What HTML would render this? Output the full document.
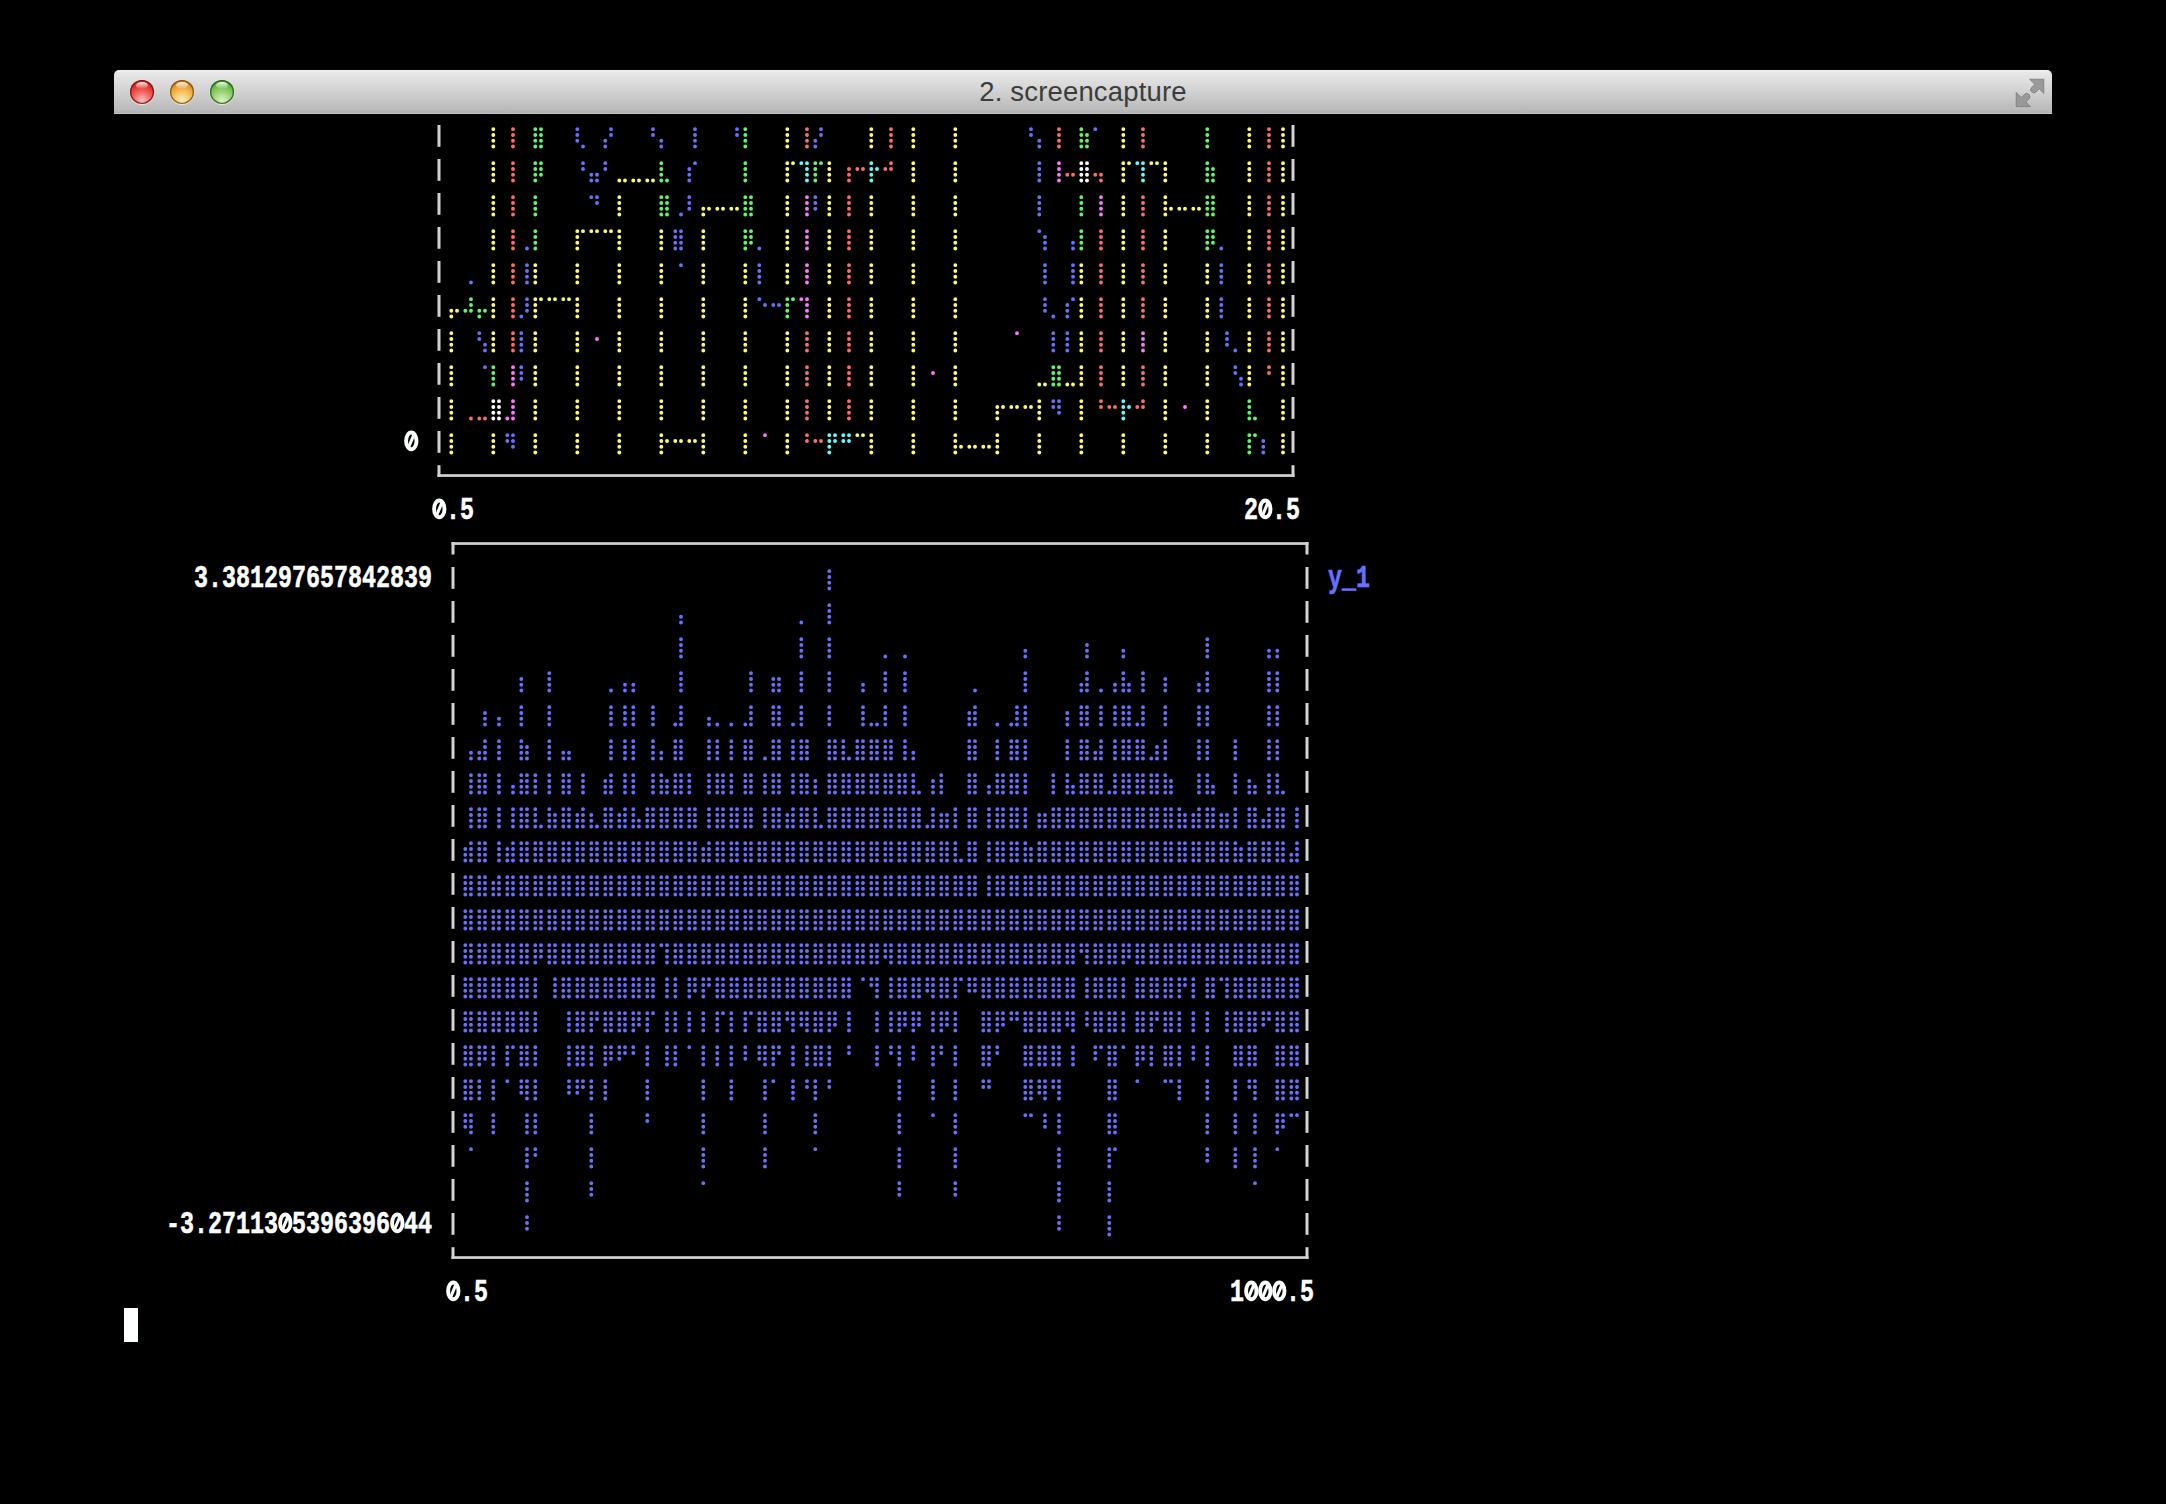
<!DOCTYPE html>
<html><head><meta charset="utf-8"><title>2. screencapture</title>
<style>
html,body{margin:0;padding:0;background:#000;width:2166px;height:1504px;overflow:hidden;}
#bar{position:absolute;left:114px;top:70px;width:1938px;height:44px;border-radius:5px 5px 0 0;
background:linear-gradient(#f6f6f6 0px,#e8e8e8 2px,#d1d1d1 22px,#b8b8b8 41px,#b0b0b0 42.6px,#c4c4c4 43.2px,#c4c4c4 44px);}
#title{position:absolute;left:0;top:0;width:100%;text-align:center;font-family:"Liberation Sans",sans-serif;font-size:27.5px;letter-spacing:0.17px;line-height:44px;color:#3c3c3c;}
.tl{position:absolute;top:10px;width:24px;height:24px;border-radius:50%;box-shadow:0 1px 1px rgba(255,255,255,.7);}
#red{left:16px;box-shadow:inset 0 0 0 1.3px rgba(110,10,10,.75),0 1px 1px rgba(255,255,255,.7);background:radial-gradient(circle at 50% 85%,#f8c3c3 0,#f36a66 35%,#e53a36 60%,#b81d1a 92%,#7d1210 100%);}
#yel{left:56px;box-shadow:inset 0 0 0 1.3px rgba(110,70,5,.75),0 1px 1px rgba(255,255,255,.7);background:radial-gradient(circle at 50% 85%,#fbefc0 0,#f6c564 35%,#ee9f37 60%,#b87413 92%,#7a4d0a 100%);}
#grn{left:96px;box-shadow:inset 0 0 0 1.3px rgba(30,80,15,.75),0 1px 1px rgba(255,255,255,.7);background:radial-gradient(circle at 50% 85%,#e0f2cc 0,#9fd67a 35%,#74c04e 60%,#3f8a26 92%,#285c18 100%);}
.hl{position:absolute;left:6px;top:2px;width:12px;height:7px;border-radius:50%;background:linear-gradient(rgba(255,255,255,.95),rgba(255,255,255,0));}
#fs{position:absolute;left:1901px;top:8px;}
svg#term{position:absolute;left:0;top:0;}
#term text{font-family:"Liberation Mono",monospace;font-weight:bold;font-size:31px;}
</style></head><body>
<div id="bar">
<div id="title">2. screencapture</div>
<div class="tl" id="red"><div class="hl"></div></div>
<div class="tl" id="yel"><div class="hl"></div></div>
<div class="tl" id="grn"><div class="hl"></div></div>
<svg id="fs" width="32" height="32" viewBox="0 0 32 32"><g fill="#999" stroke="#727272" stroke-width="0.7">
<path d="M14.6 1.2h14.2v14.2l-4.6-4.6-3.1 3.1a3.1 3.1 0 0 1-4.5-4.5l3.1-3.1z"/>
<path d="M1.2 14.4v14.2h14.2l-4.6-4.6 3.1-3.1a3.1 3.1 0 0 0-4.5-4.5l-3.1 3.1z"/>
</g></svg>
</div>
<svg id="term" width="2166" height="1504" viewBox="0 0 2166 1504">
<g fill="#d2d2d2"><rect x="437.5" y="125" width="3" height="21.8"/><rect x="437.5" y="159" width="3" height="21.8"/><rect x="437.5" y="193" width="3" height="21.8"/><rect x="437.5" y="227" width="3" height="21.8"/><rect x="437.5" y="261" width="3" height="21.8"/><rect x="437.5" y="295" width="3" height="21.8"/><rect x="437.5" y="329" width="3" height="21.8"/><rect x="437.5" y="363" width="3" height="21.8"/><rect x="437.5" y="397" width="3" height="21.8"/><rect x="437.5" y="431" width="3" height="21.8"/><rect x="1291.5" y="125" width="3" height="21.8"/><rect x="1291.5" y="159" width="3" height="21.8"/><rect x="1291.5" y="193" width="3" height="21.8"/><rect x="1291.5" y="227" width="3" height="21.8"/><rect x="1291.5" y="261" width="3" height="21.8"/><rect x="1291.5" y="295" width="3" height="21.8"/><rect x="1291.5" y="329" width="3" height="21.8"/><rect x="1291.5" y="363" width="3" height="21.8"/><rect x="1291.5" y="397" width="3" height="21.8"/><rect x="1291.5" y="431" width="3" height="21.8"/><rect x="437.5" y="474.2" width="857.0" height="2.7"/><rect x="437.5" y="465.2" width="3" height="11.7"/><rect x="1291.5" y="465.2" width="3" height="11.7"/><rect x="451.5" y="542.2" width="857.0" height="2.7"/><rect x="451.5" y="542.2" width="3" height="12.3"/><rect x="1305.5" y="542.2" width="3" height="12.3"/><rect x="451.5" y="567" width="3" height="21.8"/><rect x="451.5" y="601" width="3" height="21.8"/><rect x="451.5" y="635" width="3" height="21.8"/><rect x="451.5" y="669" width="3" height="21.8"/><rect x="451.5" y="703" width="3" height="21.8"/><rect x="451.5" y="737" width="3" height="21.8"/><rect x="451.5" y="771" width="3" height="21.8"/><rect x="451.5" y="805" width="3" height="21.8"/><rect x="451.5" y="839" width="3" height="21.8"/><rect x="451.5" y="873" width="3" height="21.8"/><rect x="451.5" y="907" width="3" height="21.8"/><rect x="451.5" y="941" width="3" height="21.8"/><rect x="451.5" y="975" width="3" height="21.8"/><rect x="451.5" y="1009" width="3" height="21.8"/><rect x="451.5" y="1043" width="3" height="21.8"/><rect x="451.5" y="1077" width="3" height="21.8"/><rect x="451.5" y="1111" width="3" height="21.8"/><rect x="451.5" y="1145" width="3" height="21.8"/><rect x="451.5" y="1179" width="3" height="21.8"/><rect x="451.5" y="1213" width="3" height="21.8"/><rect x="1305.5" y="567" width="3" height="21.8"/><rect x="1305.5" y="601" width="3" height="21.8"/><rect x="1305.5" y="635" width="3" height="21.8"/><rect x="1305.5" y="669" width="3" height="21.8"/><rect x="1305.5" y="703" width="3" height="21.8"/><rect x="1305.5" y="737" width="3" height="21.8"/><rect x="1305.5" y="771" width="3" height="21.8"/><rect x="1305.5" y="805" width="3" height="21.8"/><rect x="1305.5" y="839" width="3" height="21.8"/><rect x="1305.5" y="873" width="3" height="21.8"/><rect x="1305.5" y="907" width="3" height="21.8"/><rect x="1305.5" y="941" width="3" height="21.8"/><rect x="1305.5" y="975" width="3" height="21.8"/><rect x="1305.5" y="1009" width="3" height="21.8"/><rect x="1305.5" y="1043" width="3" height="21.8"/><rect x="1305.5" y="1077" width="3" height="21.8"/><rect x="1305.5" y="1111" width="3" height="21.8"/><rect x="1305.5" y="1145" width="3" height="21.8"/><rect x="1305.5" y="1179" width="3" height="21.8"/><rect x="1305.5" y="1213" width="3" height="21.8"/><rect x="451.5" y="1256.2" width="857.0" height="2.7"/><rect x="451.5" y="1247.2" width="3" height="11.7"/><rect x="1305.5" y="1247.2" width="3" height="11.7"/></g>
<g fill="none" stroke-width="3.9" stroke-linecap="round"><path stroke="#fefb67" d="M493.3 129.15h0M493.3 134.95h0M493.3 140.75h0M493.3 146.55h0M787.3 129.15h0M787.3 134.95h0M787.3 140.75h0M787.3 146.55h0M871.3 129.15h0M871.3 134.95h0M871.3 140.75h0M871.3 146.55h0M913.3 129.15h0M913.3 134.95h0M913.3 140.75h0M913.3 146.55h0M955.3 129.15h0M955.3 134.95h0M955.3 140.75h0M955.3 146.55h0M1123.3 129.15h0M1123.3 134.95h0M1123.3 140.75h0M1123.3 146.55h0M1249.3 129.15h0M1249.3 134.95h0M1249.3 140.75h0M1249.3 146.55h0M1283.0 129.15h0M1283.0 134.95h0M1283.0 140.75h0M1283.0 146.55h0M493.3 163.15h0M493.3 168.95h0M493.3 174.75h0M493.3 180.55h0M619.3 180.55h0M625.0 180.55h0M633.3 180.55h0M639.0 180.55h0M647.3 180.55h0M653.0 180.55h0M787.3 163.15h0M787.3 168.95h0M787.3 174.75h0M787.3 180.55h0M793.0 163.15h0M829.3 163.15h0M829.3 168.95h0M829.3 174.75h0M829.3 180.55h0M913.3 163.15h0M913.3 168.95h0M913.3 174.75h0M913.3 180.55h0M955.3 163.15h0M955.3 168.95h0M955.3 174.75h0M955.3 180.55h0M1123.3 163.15h0M1123.3 168.95h0M1123.3 174.75h0M1123.3 180.55h0M1129.0 163.15h0M1151.3 163.15h0M1157.0 163.15h0M1165.3 163.15h0M1165.3 168.95h0M1165.3 174.75h0M1165.3 180.55h0M1249.3 163.15h0M1249.3 168.95h0M1249.3 174.75h0M1249.3 180.55h0M1283.0 163.15h0M1283.0 168.95h0M1283.0 174.75h0M1283.0 180.55h0M493.3 197.15h0M493.3 202.95h0M493.3 208.75h0M493.3 214.55h0M619.3 197.15h0M619.3 202.95h0M619.3 208.75h0M619.3 214.55h0M703.3 208.75h0M703.3 214.55h0M709.0 208.75h0M717.3 208.75h0M723.0 208.75h0M731.3 208.75h0M737.0 208.75h0M787.3 197.15h0M787.3 202.95h0M787.3 208.75h0M787.3 214.55h0M829.3 197.15h0M829.3 202.95h0M829.3 208.75h0M829.3 214.55h0M871.3 197.15h0M871.3 202.95h0M871.3 208.75h0M871.3 214.55h0M913.3 197.15h0M913.3 202.95h0M913.3 208.75h0M913.3 214.55h0M955.3 197.15h0M955.3 202.95h0M955.3 208.75h0M955.3 214.55h0M1123.3 197.15h0M1123.3 202.95h0M1123.3 208.75h0M1123.3 214.55h0M1165.3 197.15h0M1165.3 202.95h0M1165.3 208.75h0M1165.3 214.55h0M1171.0 208.75h0M1179.3 208.75h0M1185.0 208.75h0M1193.3 208.75h0M1199.0 208.75h0M1249.3 197.15h0M1249.3 202.95h0M1249.3 208.75h0M1249.3 214.55h0M1283.0 197.15h0M1283.0 202.95h0M1283.0 208.75h0M1283.0 214.55h0M493.3 231.15h0M493.3 236.95h0M493.3 242.75h0M493.3 248.55h0M577.3 231.15h0M577.3 236.95h0M577.3 242.75h0M577.3 248.55h0M583.0 231.15h0M591.3 231.15h0M597.0 231.15h0M605.3 231.15h0M611.0 231.15h0M619.3 231.15h0M619.3 236.95h0M619.3 242.75h0M619.3 248.55h0M661.3 231.15h0M661.3 236.95h0M661.3 242.75h0M661.3 248.55h0M703.3 231.15h0M703.3 236.95h0M703.3 242.75h0M703.3 248.55h0M787.3 231.15h0M787.3 236.95h0M787.3 242.75h0M787.3 248.55h0M829.3 231.15h0M829.3 236.95h0M829.3 242.75h0M829.3 248.55h0M871.3 231.15h0M871.3 236.95h0M871.3 242.75h0M871.3 248.55h0M913.3 231.15h0M913.3 236.95h0M913.3 242.75h0M913.3 248.55h0M955.3 231.15h0M955.3 236.95h0M955.3 242.75h0M955.3 248.55h0M1123.3 231.15h0M1123.3 236.95h0M1123.3 242.75h0M1123.3 248.55h0M1165.3 231.15h0M1165.3 236.95h0M1165.3 242.75h0M1165.3 248.55h0M1249.3 231.15h0M1249.3 236.95h0M1249.3 242.75h0M1249.3 248.55h0M1283.0 231.15h0M1283.0 236.95h0M1283.0 242.75h0M1283.0 248.55h0M493.3 265.15h0M493.3 270.95h0M493.3 276.75h0M493.3 282.55h0M535.3 265.15h0M535.3 270.95h0M535.3 276.75h0M535.3 282.55h0M577.3 265.15h0M577.3 270.95h0M577.3 276.75h0M577.3 282.55h0M619.3 265.15h0M619.3 270.95h0M619.3 276.75h0M619.3 282.55h0M661.3 265.15h0M661.3 270.95h0M661.3 276.75h0M661.3 282.55h0M703.3 265.15h0M703.3 270.95h0M703.3 276.75h0M703.3 282.55h0M745.3 265.15h0M745.3 270.95h0M745.3 276.75h0M745.3 282.55h0M787.3 265.15h0M787.3 270.95h0M787.3 276.75h0M787.3 282.55h0M829.3 265.15h0M829.3 270.95h0M829.3 276.75h0M829.3 282.55h0M871.3 265.15h0M871.3 270.95h0M871.3 276.75h0M871.3 282.55h0M913.3 265.15h0M913.3 270.95h0M913.3 276.75h0M913.3 282.55h0M955.3 265.15h0M955.3 270.95h0M955.3 276.75h0M955.3 282.55h0M1081.3 265.15h0M1081.3 270.95h0M1081.3 276.75h0M1081.3 282.55h0M1123.3 265.15h0M1123.3 270.95h0M1123.3 276.75h0M1123.3 282.55h0M1165.3 265.15h0M1165.3 270.95h0M1165.3 276.75h0M1165.3 282.55h0M1207.3 265.15h0M1207.3 270.95h0M1207.3 276.75h0M1207.3 282.55h0M1249.3 265.15h0M1249.3 270.95h0M1249.3 276.75h0M1249.3 282.55h0M1283.0 265.15h0M1283.0 270.95h0M1283.0 276.75h0M1283.0 282.55h0M451.3 310.75h0M451.3 316.55h0M457.0 310.75h0M493.3 299.15h0M493.3 304.95h0M493.3 310.75h0M493.3 316.55h0M535.3 299.15h0M535.3 304.95h0M535.3 310.75h0M535.3 316.55h0M541.0 299.15h0M549.3 299.15h0M555.0 299.15h0M563.3 299.15h0M569.0 299.15h0M577.3 299.15h0M577.3 304.95h0M577.3 310.75h0M577.3 316.55h0M619.3 299.15h0M619.3 304.95h0M619.3 310.75h0M619.3 316.55h0M661.3 299.15h0M661.3 304.95h0M661.3 310.75h0M661.3 316.55h0M703.3 299.15h0M703.3 304.95h0M703.3 310.75h0M703.3 316.55h0M745.3 299.15h0M745.3 304.95h0M745.3 310.75h0M745.3 316.55h0M829.3 299.15h0M829.3 304.95h0M829.3 310.75h0M829.3 316.55h0M871.3 299.15h0M871.3 304.95h0M871.3 310.75h0M871.3 316.55h0M913.3 299.15h0M913.3 304.95h0M913.3 310.75h0M913.3 316.55h0M955.3 299.15h0M955.3 304.95h0M955.3 310.75h0M955.3 316.55h0M1081.3 299.15h0M1081.3 304.95h0M1081.3 310.75h0M1081.3 316.55h0M1123.3 299.15h0M1123.3 304.95h0M1123.3 310.75h0M1123.3 316.55h0M1165.3 299.15h0M1165.3 304.95h0M1165.3 310.75h0M1165.3 316.55h0M1207.3 299.15h0M1207.3 304.95h0M1207.3 310.75h0M1207.3 316.55h0M1249.3 299.15h0M1249.3 304.95h0M1249.3 310.75h0M1249.3 316.55h0M1283.0 299.15h0M1283.0 304.95h0M1283.0 310.75h0M1283.0 316.55h0M451.3 333.15h0M451.3 338.95h0M451.3 344.75h0M451.3 350.55h0M493.3 333.15h0M493.3 338.95h0M493.3 344.75h0M493.3 350.55h0M535.3 333.15h0M535.3 338.95h0M535.3 344.75h0M535.3 350.55h0M577.3 333.15h0M577.3 338.95h0M577.3 344.75h0M577.3 350.55h0M619.3 333.15h0M619.3 338.95h0M619.3 344.75h0M619.3 350.55h0M661.3 333.15h0M661.3 338.95h0M661.3 344.75h0M661.3 350.55h0M703.3 333.15h0M703.3 338.95h0M703.3 344.75h0M703.3 350.55h0M745.3 333.15h0M745.3 338.95h0M745.3 344.75h0M745.3 350.55h0M787.3 333.15h0M787.3 338.95h0M787.3 344.75h0M787.3 350.55h0M829.3 333.15h0M829.3 338.95h0M829.3 344.75h0M829.3 350.55h0M871.3 333.15h0M871.3 338.95h0M871.3 344.75h0M871.3 350.55h0M913.3 333.15h0M913.3 338.95h0M913.3 344.75h0M913.3 350.55h0M955.3 333.15h0M955.3 338.95h0M955.3 344.75h0M955.3 350.55h0M1081.3 333.15h0M1081.3 338.95h0M1081.3 344.75h0M1081.3 350.55h0M1123.3 333.15h0M1123.3 338.95h0M1123.3 344.75h0M1123.3 350.55h0M1165.3 333.15h0M1165.3 338.95h0M1165.3 344.75h0M1165.3 350.55h0M1207.3 333.15h0M1207.3 338.95h0M1207.3 344.75h0M1207.3 350.55h0M1249.3 333.15h0M1249.3 338.95h0M1249.3 344.75h0M1249.3 350.55h0M1283.0 333.15h0M1283.0 338.95h0M1283.0 344.75h0M1283.0 350.55h0M451.3 367.15h0M451.3 372.95h0M451.3 378.75h0M451.3 384.55h0M535.3 367.15h0M535.3 372.95h0M535.3 378.75h0M535.3 384.55h0M577.3 367.15h0M577.3 372.95h0M577.3 378.75h0M577.3 384.55h0M619.3 367.15h0M619.3 372.95h0M619.3 378.75h0M619.3 384.55h0M661.3 367.15h0M661.3 372.95h0M661.3 378.75h0M661.3 384.55h0M703.3 367.15h0M703.3 372.95h0M703.3 378.75h0M703.3 384.55h0M745.3 367.15h0M745.3 372.95h0M745.3 378.75h0M745.3 384.55h0M787.3 367.15h0M787.3 372.95h0M787.3 378.75h0M787.3 384.55h0M829.3 367.15h0M829.3 372.95h0M829.3 378.75h0M829.3 384.55h0M871.3 367.15h0M871.3 372.95h0M871.3 378.75h0M871.3 384.55h0M913.3 367.15h0M913.3 372.95h0M913.3 378.75h0M913.3 384.55h0M955.3 367.15h0M955.3 372.95h0M955.3 378.75h0M955.3 384.55h0M1039.3 384.55h0M1045.0 384.55h0M1067.3 384.55h0M1073.0 384.55h0M1081.3 367.15h0M1081.3 372.95h0M1081.3 378.75h0M1081.3 384.55h0M1123.3 367.15h0M1123.3 372.95h0M1123.3 378.75h0M1123.3 384.55h0M1165.3 367.15h0M1165.3 372.95h0M1165.3 378.75h0M1165.3 384.55h0M1207.3 367.15h0M1207.3 372.95h0M1207.3 378.75h0M1207.3 384.55h0M1249.3 367.15h0M1249.3 372.95h0M1249.3 378.75h0M1249.3 384.55h0M1283.0 367.15h0M1283.0 372.95h0M1283.0 378.75h0M1283.0 384.55h0M451.3 401.15h0M451.3 406.95h0M451.3 412.75h0M451.3 418.55h0M535.3 401.15h0M535.3 406.95h0M535.3 412.75h0M535.3 418.55h0M577.3 401.15h0M577.3 406.95h0M577.3 412.75h0M577.3 418.55h0M619.3 401.15h0M619.3 406.95h0M619.3 412.75h0M619.3 418.55h0M661.3 401.15h0M661.3 406.95h0M661.3 412.75h0M661.3 418.55h0M703.3 401.15h0M703.3 406.95h0M703.3 412.75h0M703.3 418.55h0M745.3 401.15h0M745.3 406.95h0M745.3 412.75h0M745.3 418.55h0M787.3 401.15h0M787.3 406.95h0M787.3 412.75h0M787.3 418.55h0M829.3 401.15h0M829.3 406.95h0M829.3 412.75h0M829.3 418.55h0M871.3 401.15h0M871.3 406.95h0M871.3 412.75h0M871.3 418.55h0M913.3 401.15h0M913.3 406.95h0M913.3 412.75h0M913.3 418.55h0M955.3 401.15h0M955.3 406.95h0M955.3 412.75h0M955.3 418.55h0M997.3 406.95h0M997.3 412.75h0M997.3 418.55h0M1003.0 406.95h0M1011.3 406.95h0M1017.0 406.95h0M1025.3 406.95h0M1031.0 406.95h0M1039.3 401.15h0M1039.3 406.95h0M1039.3 412.75h0M1039.3 418.55h0M1081.3 401.15h0M1081.3 406.95h0M1081.3 412.75h0M1081.3 418.55h0M1165.3 401.15h0M1165.3 406.95h0M1165.3 412.75h0M1165.3 418.55h0M1207.3 401.15h0M1207.3 406.95h0M1207.3 412.75h0M1207.3 418.55h0M1283.0 401.15h0M1283.0 406.95h0M1283.0 412.75h0M1283.0 418.55h0M451.3 435.15h0M451.3 440.95h0M451.3 446.75h0M451.3 452.55h0M493.3 435.15h0M493.3 440.95h0M493.3 446.75h0M493.3 452.55h0M535.3 435.15h0M535.3 440.95h0M535.3 446.75h0M535.3 452.55h0M577.3 435.15h0M577.3 440.95h0M577.3 446.75h0M577.3 452.55h0M619.3 435.15h0M619.3 440.95h0M619.3 446.75h0M619.3 452.55h0M661.3 435.15h0M661.3 440.95h0M661.3 446.75h0M661.3 452.55h0M667.0 440.95h0M675.3 440.95h0M681.0 440.95h0M689.3 440.95h0M695.0 440.95h0M703.3 435.15h0M703.3 440.95h0M703.3 446.75h0M703.3 452.55h0M745.3 435.15h0M745.3 440.95h0M745.3 446.75h0M745.3 452.55h0M787.3 435.15h0M787.3 440.95h0M787.3 446.75h0M787.3 452.55h0M857.3 435.15h0M863.0 435.15h0M871.3 435.15h0M871.3 440.95h0M871.3 446.75h0M871.3 452.55h0M913.3 435.15h0M913.3 440.95h0M913.3 446.75h0M913.3 452.55h0M955.3 435.15h0M955.3 440.95h0M955.3 446.75h0M955.3 452.55h0M961.0 446.75h0M969.3 446.75h0M975.0 446.75h0M983.3 446.75h0M989.0 446.75h0M997.3 435.15h0M997.3 440.95h0M997.3 446.75h0M997.3 452.55h0M1039.3 435.15h0M1039.3 440.95h0M1039.3 446.75h0M1039.3 452.55h0M1081.3 435.15h0M1081.3 440.95h0M1081.3 446.75h0M1081.3 452.55h0M1123.3 435.15h0M1123.3 440.95h0M1123.3 446.75h0M1123.3 452.55h0M1165.3 435.15h0M1165.3 440.95h0M1165.3 446.75h0M1165.3 452.55h0M1207.3 435.15h0M1207.3 440.95h0M1207.3 446.75h0M1207.3 452.55h0M1283.0 435.15h0M1283.0 440.95h0M1283.0 446.75h0M1283.0 452.55h0"/><path stroke="#ff6d67" d="M513.0 129.15h0M513.0 134.95h0M513.0 140.75h0M513.0 146.55h0M807.0 129.15h0M807.0 134.95h0M807.0 140.75h0M807.0 146.55h0M891.0 129.15h0M891.0 134.95h0M891.0 140.75h0M891.0 146.55h0M1059.0 129.15h0M1059.0 134.95h0M1059.0 140.75h0M1059.0 146.55h0M1143.0 129.15h0M1143.0 134.95h0M1143.0 140.75h0M1143.0 146.55h0M1269.0 129.15h0M1269.0 134.95h0M1269.0 140.75h0M1269.0 146.55h0M513.0 163.15h0M513.0 168.95h0M513.0 174.75h0M513.0 180.55h0M849.0 168.95h0M849.0 174.75h0M849.0 180.55h0M857.3 168.95h0M863.0 168.95h0M885.3 168.95h0M891.0 163.15h0M891.0 168.95h0M1067.3 174.75h0M1073.0 174.75h0M1095.3 174.75h0M1101.0 174.75h0M1101.0 180.55h0M1269.0 163.15h0M1269.0 168.95h0M1269.0 174.75h0M1269.0 180.55h0M513.0 197.15h0M513.0 202.95h0M513.0 208.75h0M513.0 214.55h0M849.0 197.15h0M849.0 202.95h0M849.0 208.75h0M849.0 214.55h0M1143.0 197.15h0M1143.0 202.95h0M1143.0 208.75h0M1143.0 214.55h0M1269.0 197.15h0M1269.0 202.95h0M1269.0 208.75h0M1269.0 214.55h0M513.0 231.15h0M513.0 236.95h0M513.0 242.75h0M513.0 248.55h0M849.0 231.15h0M849.0 236.95h0M849.0 242.75h0M849.0 248.55h0M1101.0 231.15h0M1101.0 236.95h0M1101.0 242.75h0M1101.0 248.55h0M1143.0 231.15h0M1143.0 236.95h0M1143.0 242.75h0M1143.0 248.55h0M1269.0 231.15h0M1269.0 236.95h0M1269.0 242.75h0M1269.0 248.55h0M513.0 265.15h0M513.0 270.95h0M513.0 276.75h0M513.0 282.55h0M849.0 265.15h0M849.0 270.95h0M849.0 276.75h0M849.0 282.55h0M1101.0 265.15h0M1101.0 270.95h0M1101.0 276.75h0M1101.0 282.55h0M1143.0 265.15h0M1143.0 270.95h0M1143.0 276.75h0M1143.0 282.55h0M1269.0 265.15h0M1269.0 270.95h0M1269.0 276.75h0M1269.0 282.55h0M513.0 299.15h0M513.0 304.95h0M513.0 310.75h0M513.0 316.55h0M849.0 299.15h0M849.0 304.95h0M849.0 310.75h0M849.0 316.55h0M1101.0 299.15h0M1101.0 304.95h0M1101.0 310.75h0M1101.0 316.55h0M1143.0 299.15h0M1143.0 304.95h0M1143.0 310.75h0M1143.0 316.55h0M1269.0 299.15h0M1269.0 304.95h0M1269.0 310.75h0M1269.0 316.55h0M513.0 333.15h0M513.0 338.95h0M513.0 344.75h0M513.0 350.55h0M807.0 333.15h0M807.0 338.95h0M807.0 344.75h0M807.0 350.55h0M849.0 333.15h0M849.0 338.95h0M849.0 344.75h0M849.0 350.55h0M1101.0 333.15h0M1101.0 338.95h0M1101.0 344.75h0M1101.0 350.55h0M1269.0 333.15h0M1269.0 338.95h0M1269.0 344.75h0M1269.0 350.55h0M807.0 367.15h0M807.0 372.95h0M807.0 378.75h0M807.0 384.55h0M849.0 367.15h0M849.0 372.95h0M849.0 378.75h0M849.0 384.55h0M1101.0 367.15h0M1101.0 372.95h0M1101.0 378.75h0M1101.0 384.55h0M1143.0 367.15h0M1143.0 372.95h0M1143.0 378.75h0M1143.0 384.55h0M1269.0 367.15h0M1269.0 372.95h0M471.0 418.55h0M479.3 418.55h0M485.0 418.55h0M807.0 401.15h0M807.0 406.95h0M807.0 412.75h0M807.0 418.55h0M849.0 401.15h0M849.0 406.95h0M849.0 412.75h0M849.0 418.55h0M1101.0 401.15h0M1101.0 406.95h0M1109.3 406.95h0M1115.0 406.95h0M1137.3 406.95h0M1143.0 401.15h0M1143.0 406.95h0M807.0 435.15h0M807.0 440.95h0M815.3 440.95h0M821.0 440.95h0"/><path stroke="#5ff967" d="M535.3 129.15h0M535.3 134.95h0M535.3 140.75h0M535.3 146.55h0M541.0 129.15h0M541.0 134.95h0M541.0 140.75h0M541.0 146.55h0M745.3 129.15h0M745.3 134.95h0M745.3 140.75h0M745.3 146.55h0M1081.3 129.15h0M1081.3 134.95h0M1081.3 140.75h0M1081.3 146.55h0M1087.0 134.95h0M1087.0 140.75h0M1087.0 146.55h0M1207.3 129.15h0M1207.3 134.95h0M1207.3 140.75h0M1207.3 146.55h0M535.3 163.15h0M535.3 168.95h0M535.3 174.75h0M535.3 180.55h0M541.0 163.15h0M541.0 168.95h0M541.0 174.75h0M661.3 163.15h0M661.3 168.95h0M661.3 174.75h0M661.3 180.55h0M667.0 180.55h0M745.3 163.15h0M745.3 168.95h0M745.3 174.75h0M745.3 180.55h0M815.3 163.15h0M815.3 168.95h0M815.3 174.75h0M815.3 180.55h0M821.0 163.15h0M1207.3 163.15h0M1207.3 168.95h0M1207.3 174.75h0M1207.3 180.55h0M1213.0 168.95h0M1213.0 174.75h0M1213.0 180.55h0M535.3 197.15h0M535.3 202.95h0M535.3 208.75h0M535.3 214.55h0M661.3 197.15h0M661.3 202.95h0M661.3 208.75h0M661.3 214.55h0M667.0 197.15h0M667.0 202.95h0M667.0 208.75h0M667.0 214.55h0M745.3 197.15h0M745.3 202.95h0M745.3 208.75h0M745.3 214.55h0M751.0 197.15h0M751.0 202.95h0M751.0 208.75h0M751.0 214.55h0M1081.3 197.15h0M1081.3 202.95h0M1081.3 208.75h0M1081.3 214.55h0M1207.3 197.15h0M1207.3 202.95h0M1207.3 208.75h0M1207.3 214.55h0M1213.0 197.15h0M1213.0 202.95h0M1213.0 208.75h0M1213.0 214.55h0M535.3 231.15h0M535.3 236.95h0M535.3 242.75h0M535.3 248.55h0M745.3 231.15h0M745.3 236.95h0M745.3 242.75h0M745.3 248.55h0M751.0 231.15h0M751.0 236.95h0M751.0 242.75h0M1081.3 231.15h0M1081.3 236.95h0M1081.3 242.75h0M1081.3 248.55h0M1207.3 231.15h0M1207.3 236.95h0M1207.3 242.75h0M1207.3 248.55h0M1213.0 231.15h0M1213.0 236.95h0M1213.0 242.75h0M465.3 310.75h0M471.0 299.15h0M471.0 304.95h0M471.0 310.75h0M479.3 310.75h0M479.3 316.55h0M485.0 310.75h0M787.3 299.15h0M787.3 304.95h0M787.3 310.75h0M787.3 316.55h0M793.0 299.15h0M493.3 367.15h0M493.3 372.95h0M493.3 378.75h0M493.3 384.55h0M1053.3 367.15h0M1053.3 372.95h0M1053.3 378.75h0M1053.3 384.55h0M1059.0 367.15h0M1059.0 372.95h0M1059.0 378.75h0M1059.0 384.55h0M1249.3 401.15h0M1249.3 406.95h0M1249.3 412.75h0M1249.3 418.55h0M1255.0 418.55h0M1249.3 435.15h0M1249.3 440.95h0M1249.3 446.75h0M1249.3 452.55h0M1255.0 435.15h0"/><path stroke="#6871ff" d="M577.3 129.15h0M577.3 134.95h0M577.3 140.75h0M583.0 146.55h0M605.3 140.75h0M605.3 146.55h0M611.0 129.15h0M611.0 134.95h0M653.0 129.15h0M653.0 134.95h0M661.3 140.75h0M661.3 146.55h0M695.0 129.15h0M695.0 134.95h0M695.0 140.75h0M695.0 146.55h0M737.0 129.15h0M737.0 134.95h0M815.3 140.75h0M815.3 146.55h0M821.0 129.15h0M821.0 134.95h0M1031.0 129.15h0M1031.0 134.95h0M1039.3 140.75h0M1039.3 146.55h0M1095.3 129.15h0M583.0 163.15h0M583.0 168.95h0M591.3 174.75h0M591.3 180.55h0M597.0 174.75h0M597.0 180.55h0M605.3 163.15h0M605.3 168.95h0M689.3 168.95h0M689.3 174.75h0M689.3 180.55h0M695.0 163.15h0M1039.3 163.15h0M1039.3 168.95h0M1039.3 174.75h0M1039.3 180.55h0M591.3 197.15h0M597.0 197.15h0M597.0 202.95h0M681.0 214.55h0M689.3 197.15h0M689.3 202.95h0M689.3 208.75h0M815.3 197.15h0M815.3 202.95h0M815.3 208.75h0M1039.3 197.15h0M1039.3 202.95h0M1039.3 208.75h0M1039.3 214.55h0M527.0 248.55h0M675.3 231.15h0M675.3 236.95h0M675.3 242.75h0M675.3 248.55h0M681.0 231.15h0M681.0 236.95h0M681.0 242.75h0M681.0 248.55h0M759.3 248.55h0M1039.3 231.15h0M1045.0 236.95h0M1045.0 242.75h0M1045.0 248.55h0M1073.0 242.75h0M1073.0 248.55h0M1221.3 248.55h0M471.0 282.55h0M527.0 265.15h0M527.0 270.95h0M527.0 276.75h0M527.0 282.55h0M681.0 265.15h0M759.3 265.15h0M759.3 270.95h0M759.3 276.75h0M759.3 282.55h0M1045.0 265.15h0M1045.0 270.95h0M1045.0 276.75h0M1045.0 282.55h0M1073.0 265.15h0M1073.0 270.95h0M1073.0 276.75h0M1073.0 282.55h0M1221.3 265.15h0M1221.3 270.95h0M1221.3 276.75h0M1221.3 282.55h0M521.3 316.55h0M527.0 299.15h0M527.0 304.95h0M527.0 310.75h0M759.3 299.15h0M765.0 304.95h0M773.3 304.95h0M779.0 304.95h0M1045.0 299.15h0M1045.0 304.95h0M1045.0 310.75h0M1053.3 316.55h0M1067.3 304.95h0M1067.3 310.75h0M1067.3 316.55h0M1073.0 299.15h0M1221.3 299.15h0M1221.3 304.95h0M1221.3 310.75h0M1221.3 316.55h0M479.3 333.15h0M479.3 338.95h0M485.0 344.75h0M485.0 350.55h0M521.3 333.15h0M521.3 338.95h0M521.3 344.75h0M521.3 350.55h0M1053.3 333.15h0M1053.3 338.95h0M1053.3 344.75h0M1053.3 350.55h0M1067.3 333.15h0M1067.3 338.95h0M1067.3 344.75h0M1067.3 350.55h0M1227.0 333.15h0M1227.0 338.95h0M1227.0 344.75h0M1235.3 350.55h0M485.0 367.15h0M521.3 367.15h0M521.3 372.95h0M521.3 378.75h0M1235.3 367.15h0M1235.3 372.95h0M1241.0 378.75h0M1241.0 384.55h0M1053.3 401.15h0M1053.3 406.95h0M1059.0 401.15h0M1059.0 406.95h0M1059.0 412.75h0M507.3 435.15h0M507.3 440.95h0M513.0 435.15h0M513.0 440.95h0M513.0 446.75h0M1263.3 440.95h0M1263.3 446.75h0M1263.3 452.55h0M829.3 571.15h0M829.3 576.95h0M829.3 582.75h0M829.3 588.55h0M681.0 616.75h0M681.0 622.55h0M801.3 622.55h0M829.3 605.15h0M829.3 610.95h0M829.3 616.75h0M829.3 622.55h0M681.0 639.15h0M681.0 644.95h0M681.0 650.75h0M681.0 656.55h0M801.3 639.15h0M801.3 644.95h0M801.3 650.75h0M801.3 656.55h0M829.3 639.15h0M829.3 644.95h0M829.3 650.75h0M829.3 656.55h0M885.3 656.55h0M905.0 656.55h0M1025.3 650.75h0M1025.3 656.55h0M1087.0 644.95h0M1087.0 650.75h0M1087.0 656.55h0M1123.3 650.75h0M1123.3 656.55h0M1207.3 639.15h0M1207.3 644.95h0M1207.3 650.75h0M1207.3 656.55h0M1269.0 650.75h0M1269.0 656.55h0M1277.3 650.75h0M1277.3 656.55h0M521.3 678.95h0M521.3 684.75h0M521.3 690.55h0M549.3 673.15h0M549.3 678.95h0M549.3 684.75h0M549.3 690.55h0M611.0 690.55h0M625.0 684.75h0M625.0 690.55h0M633.3 684.75h0M633.3 690.55h0M681.0 673.15h0M681.0 678.95h0M681.0 684.75h0M681.0 690.55h0M751.0 673.15h0M751.0 678.95h0M751.0 684.75h0M751.0 690.55h0M773.3 678.95h0M773.3 684.75h0M773.3 690.55h0M779.0 678.95h0M779.0 684.75h0M779.0 690.55h0M801.3 673.15h0M801.3 678.95h0M801.3 684.75h0M801.3 690.55h0M829.3 673.15h0M829.3 678.95h0M829.3 684.75h0M829.3 690.55h0M863.0 684.75h0M863.0 690.55h0M885.3 673.15h0M885.3 678.95h0M885.3 684.75h0M885.3 690.55h0M905.0 673.15h0M905.0 678.95h0M905.0 684.75h0M905.0 690.55h0M975.0 690.55h0M1025.3 673.15h0M1025.3 678.95h0M1025.3 684.75h0M1025.3 690.55h0M1081.3 684.75h0M1081.3 690.55h0M1087.0 673.15h0M1087.0 678.95h0M1087.0 684.75h0M1087.0 690.55h0M1101.0 690.55h0M1115.0 684.75h0M1115.0 690.55h0M1123.3 673.15h0M1123.3 678.95h0M1123.3 684.75h0M1123.3 690.55h0M1129.0 684.75h0M1129.0 690.55h0M1143.0 673.15h0M1143.0 678.95h0M1143.0 684.75h0M1143.0 690.55h0M1165.3 678.95h0M1165.3 684.75h0M1165.3 690.55h0M1199.0 684.75h0M1199.0 690.55h0M1207.3 673.15h0M1207.3 678.95h0M1207.3 684.75h0M1207.3 690.55h0M1269.0 673.15h0M1269.0 678.95h0M1269.0 684.75h0M1269.0 690.55h0M1277.3 673.15h0M1277.3 678.95h0M1277.3 684.75h0M1277.3 690.55h0M485.0 712.95h0M485.0 718.75h0M485.0 724.55h0M499.0 718.75h0M499.0 724.55h0M521.3 707.15h0M521.3 712.95h0M521.3 718.75h0M521.3 724.55h0M549.3 707.15h0M549.3 712.95h0M549.3 718.75h0M549.3 724.55h0M611.0 707.15h0M611.0 712.95h0M611.0 718.75h0M611.0 724.55h0M625.0 707.15h0M625.0 712.95h0M625.0 718.75h0M625.0 724.55h0M633.3 707.15h0M633.3 712.95h0M633.3 718.75h0M633.3 724.55h0M653.0 707.15h0M653.0 712.95h0M653.0 718.75h0M653.0 724.55h0M675.3 724.55h0M681.0 707.15h0M681.0 712.95h0M681.0 718.75h0M681.0 724.55h0M709.0 718.75h0M709.0 724.55h0M717.3 724.55h0M731.3 724.55h0M745.3 724.55h0M751.0 707.15h0M751.0 712.95h0M751.0 718.75h0M751.0 724.55h0M773.3 707.15h0M773.3 712.95h0M773.3 718.75h0M773.3 724.55h0M779.0 707.15h0M779.0 712.95h0M779.0 718.75h0M779.0 724.55h0M793.0 724.55h0M801.3 707.15h0M801.3 712.95h0M801.3 718.75h0M801.3 724.55h0M829.3 707.15h0M829.3 712.95h0M829.3 718.75h0M829.3 724.55h0M863.0 707.15h0M863.0 712.95h0M863.0 718.75h0M863.0 724.55h0M871.3 724.55h0M877.0 724.55h0M885.3 707.15h0M885.3 712.95h0M885.3 718.75h0M885.3 724.55h0M905.0 707.15h0M905.0 712.95h0M905.0 718.75h0M905.0 724.55h0M969.3 712.95h0M969.3 718.75h0M969.3 724.55h0M975.0 707.15h0M975.0 712.95h0M975.0 718.75h0M975.0 724.55h0M997.3 724.55h0M1011.3 724.55h0M1017.0 707.15h0M1017.0 712.95h0M1017.0 718.75h0M1017.0 724.55h0M1025.3 707.15h0M1025.3 712.95h0M1025.3 718.75h0M1025.3 724.55h0M1067.3 712.95h0M1067.3 718.75h0M1067.3 724.55h0M1081.3 707.15h0M1081.3 712.95h0M1081.3 718.75h0M1081.3 724.55h0M1087.0 707.15h0M1087.0 712.95h0M1087.0 718.75h0M1087.0 724.55h0M1101.0 707.15h0M1101.0 712.95h0M1101.0 718.75h0M1101.0 724.55h0M1115.0 707.15h0M1115.0 712.95h0M1115.0 718.75h0M1115.0 724.55h0M1123.3 707.15h0M1123.3 712.95h0M1123.3 718.75h0M1123.3 724.55h0M1129.0 707.15h0M1129.0 712.95h0M1129.0 718.75h0M1129.0 724.55h0M1137.3 724.55h0M1143.0 707.15h0M1143.0 712.95h0M1143.0 718.75h0M1143.0 724.55h0M1165.3 707.15h0M1165.3 712.95h0M1165.3 718.75h0M1165.3 724.55h0M1199.0 707.15h0M1199.0 712.95h0M1199.0 718.75h0M1199.0 724.55h0M1207.3 707.15h0M1207.3 712.95h0M1207.3 718.75h0M1207.3 724.55h0M1269.0 707.15h0M1269.0 712.95h0M1269.0 718.75h0M1269.0 724.55h0M1277.3 707.15h0M1277.3 712.95h0M1277.3 718.75h0M1277.3 724.55h0M471.0 752.75h0M471.0 758.55h0M479.3 752.75h0M479.3 758.55h0M485.0 741.15h0M485.0 746.95h0M485.0 752.75h0M485.0 758.55h0M499.0 741.15h0M499.0 746.95h0M499.0 752.75h0M499.0 758.55h0M521.3 741.15h0M521.3 746.95h0M521.3 752.75h0M521.3 758.55h0M527.0 746.95h0M527.0 752.75h0M527.0 758.55h0M549.3 741.15h0M549.3 746.95h0M549.3 752.75h0M549.3 758.55h0M563.3 752.75h0M563.3 758.55h0M569.0 752.75h0M569.0 758.55h0M611.0 741.15h0M611.0 746.95h0M611.0 752.75h0M611.0 758.55h0M625.0 741.15h0M625.0 746.95h0M625.0 752.75h0M625.0 758.55h0M633.3 741.15h0M633.3 746.95h0M633.3 752.75h0M633.3 758.55h0M653.0 741.15h0M653.0 746.95h0M653.0 752.75h0M653.0 758.55h0M661.3 752.75h0M661.3 758.55h0M675.3 741.15h0M675.3 746.95h0M675.3 752.75h0M675.3 758.55h0M681.0 741.15h0M681.0 746.95h0M681.0 752.75h0M681.0 758.55h0M709.0 741.15h0M709.0 746.95h0M709.0 752.75h0M709.0 758.55h0M717.3 741.15h0M717.3 746.95h0M717.3 752.75h0M717.3 758.55h0M731.3 741.15h0M731.3 746.95h0M731.3 752.75h0M731.3 758.55h0M745.3 741.15h0M745.3 746.95h0M745.3 752.75h0M745.3 758.55h0M751.0 741.15h0M751.0 746.95h0M751.0 752.75h0M751.0 758.55h0M765.0 758.55h0M773.3 741.15h0M773.3 746.95h0M773.3 752.75h0M773.3 758.55h0M779.0 741.15h0M779.0 746.95h0M779.0 752.75h0M779.0 758.55h0M793.0 741.15h0M793.0 746.95h0M793.0 752.75h0M793.0 758.55h0M801.3 741.15h0M801.3 746.95h0M801.3 752.75h0M801.3 758.55h0M807.0 741.15h0M807.0 746.95h0M807.0 752.75h0M807.0 758.55h0M829.3 741.15h0M829.3 746.95h0M829.3 752.75h0M829.3 758.55h0M835.0 741.15h0M835.0 746.95h0M835.0 752.75h0M835.0 758.55h0M843.3 741.15h0M843.3 746.95h0M843.3 752.75h0M843.3 758.55h0M849.0 758.55h0M857.3 741.15h0M857.3 746.95h0M857.3 752.75h0M857.3 758.55h0M863.0 741.15h0M863.0 746.95h0M863.0 752.75h0M863.0 758.55h0M871.3 741.15h0M871.3 746.95h0M871.3 752.75h0M871.3 758.55h0M877.0 741.15h0M877.0 746.95h0M877.0 752.75h0M877.0 758.55h0M885.3 741.15h0M885.3 746.95h0M885.3 752.75h0M885.3 758.55h0M891.0 741.15h0M891.0 746.95h0M891.0 752.75h0M891.0 758.55h0M905.0 741.15h0M905.0 746.95h0M905.0 752.75h0M905.0 758.55h0M913.3 752.75h0M913.3 758.55h0M969.3 741.15h0M969.3 746.95h0M969.3 752.75h0M969.3 758.55h0M975.0 741.15h0M975.0 746.95h0M975.0 752.75h0M975.0 758.55h0M997.3 741.15h0M997.3 746.95h0M997.3 752.75h0M997.3 758.55h0M1011.3 741.15h0M1011.3 746.95h0M1011.3 752.75h0M1011.3 758.55h0M1017.0 741.15h0M1017.0 746.95h0M1017.0 752.75h0M1017.0 758.55h0M1025.3 741.15h0M1025.3 746.95h0M1025.3 752.75h0M1025.3 758.55h0M1067.3 741.15h0M1067.3 746.95h0M1067.3 752.75h0M1067.3 758.55h0M1081.3 741.15h0M1081.3 746.95h0M1081.3 752.75h0M1081.3 758.55h0M1087.0 741.15h0M1087.0 746.95h0M1087.0 752.75h0M1087.0 758.55h0M1095.3 752.75h0M1095.3 758.55h0M1101.0 741.15h0M1101.0 746.95h0M1101.0 752.75h0M1101.0 758.55h0M1115.0 741.15h0M1115.0 746.95h0M1115.0 752.75h0M1115.0 758.55h0M1123.3 741.15h0M1123.3 746.95h0M1123.3 752.75h0M1123.3 758.55h0M1129.0 741.15h0M1129.0 746.95h0M1129.0 752.75h0M1129.0 758.55h0M1137.3 741.15h0M1137.3 746.95h0M1137.3 752.75h0M1137.3 758.55h0M1143.0 741.15h0M1143.0 746.95h0M1143.0 752.75h0M1143.0 758.55h0M1151.3 758.55h0M1157.0 746.95h0M1157.0 752.75h0M1157.0 758.55h0M1165.3 741.15h0M1165.3 746.95h0M1165.3 752.75h0M1165.3 758.55h0M1199.0 741.15h0M1199.0 746.95h0M1199.0 752.75h0M1199.0 758.55h0M1207.3 741.15h0M1207.3 746.95h0M1207.3 752.75h0M1207.3 758.55h0M1235.3 741.15h0M1235.3 746.95h0M1235.3 752.75h0M1235.3 758.55h0M1269.0 741.15h0M1269.0 746.95h0M1269.0 752.75h0M1269.0 758.55h0M1277.3 741.15h0M1277.3 746.95h0M1277.3 752.75h0M1277.3 758.55h0M471.0 775.15h0M471.0 780.95h0M471.0 786.75h0M471.0 792.55h0M479.3 775.15h0M479.3 780.95h0M479.3 786.75h0M479.3 792.55h0M485.0 775.15h0M485.0 780.95h0M485.0 786.75h0M485.0 792.55h0M499.0 775.15h0M499.0 780.95h0M499.0 786.75h0M499.0 792.55h0M513.0 786.75h0M513.0 792.55h0M521.3 775.15h0M521.3 780.95h0M521.3 786.75h0M521.3 792.55h0M527.0 775.15h0M527.0 780.95h0M527.0 786.75h0M527.0 792.55h0M535.3 775.15h0M535.3 780.95h0M535.3 786.75h0M535.3 792.55h0M549.3 775.15h0M549.3 780.95h0M549.3 786.75h0M549.3 792.55h0M563.3 775.15h0M563.3 780.95h0M563.3 786.75h0M563.3 792.55h0M569.0 775.15h0M569.0 780.95h0M569.0 786.75h0M569.0 792.55h0M583.0 775.15h0M583.0 780.95h0M583.0 786.75h0M583.0 792.55h0M605.3 780.95h0M605.3 786.75h0M605.3 792.55h0M611.0 775.15h0M611.0 780.95h0M611.0 786.75h0M611.0 792.55h0M625.0 775.15h0M625.0 780.95h0M625.0 786.75h0M625.0 792.55h0M633.3 775.15h0M633.3 780.95h0M633.3 786.75h0M633.3 792.55h0M653.0 775.15h0M653.0 780.95h0M653.0 786.75h0M653.0 792.55h0M661.3 775.15h0M661.3 780.95h0M661.3 786.75h0M661.3 792.55h0M667.0 780.95h0M667.0 786.75h0M667.0 792.55h0M675.3 775.15h0M675.3 780.95h0M675.3 786.75h0M675.3 792.55h0M681.0 775.15h0M681.0 780.95h0M681.0 786.75h0M681.0 792.55h0M689.3 775.15h0M689.3 780.95h0M689.3 786.75h0M689.3 792.55h0M709.0 775.15h0M709.0 780.95h0M709.0 786.75h0M709.0 792.55h0M717.3 775.15h0M717.3 780.95h0M717.3 786.75h0M717.3 792.55h0M723.0 775.15h0M723.0 780.95h0M723.0 786.75h0M723.0 792.55h0M731.3 775.15h0M731.3 780.95h0M731.3 786.75h0M731.3 792.55h0M745.3 775.15h0M745.3 780.95h0M745.3 786.75h0M745.3 792.55h0M751.0 775.15h0M751.0 780.95h0M751.0 786.75h0M751.0 792.55h0M765.0 775.15h0M765.0 780.95h0M765.0 786.75h0M765.0 792.55h0M773.3 775.15h0M773.3 780.95h0M773.3 786.75h0M773.3 792.55h0M779.0 775.15h0M779.0 780.95h0M779.0 786.75h0M779.0 792.55h0M793.0 775.15h0M793.0 780.95h0M793.0 786.75h0M793.0 792.55h0M801.3 775.15h0M801.3 780.95h0M801.3 786.75h0M801.3 792.55h0M807.0 775.15h0M807.0 780.95h0M807.0 786.75h0M807.0 792.55h0M815.3 780.95h0M815.3 786.75h0M815.3 792.55h0M829.3 775.15h0M829.3 780.95h0M829.3 786.75h0M829.3 792.55h0M835.0 775.15h0M835.0 780.95h0M835.0 786.75h0M835.0 792.55h0M843.3 775.15h0M843.3 780.95h0M843.3 786.75h0M843.3 792.55h0M849.0 775.15h0M849.0 780.95h0M849.0 786.75h0M849.0 792.55h0M857.3 775.15h0M857.3 780.95h0M857.3 786.75h0M857.3 792.55h0M863.0 775.15h0M863.0 780.95h0M863.0 786.75h0M863.0 792.55h0M871.3 775.15h0M871.3 780.95h0M871.3 786.75h0M871.3 792.55h0M877.0 775.15h0M877.0 780.95h0M877.0 786.75h0M877.0 792.55h0M885.3 775.15h0M885.3 780.95h0M885.3 786.75h0M885.3 792.55h0M891.0 775.15h0M891.0 780.95h0M891.0 786.75h0M891.0 792.55h0M899.3 775.15h0M899.3 780.95h0M899.3 786.75h0M899.3 792.55h0M905.0 775.15h0M905.0 780.95h0M905.0 786.75h0M905.0 792.55h0M913.3 775.15h0M913.3 780.95h0M913.3 786.75h0M913.3 792.55h0M919.0 792.55h0M933.0 780.95h0M933.0 786.75h0M933.0 792.55h0M941.3 775.15h0M941.3 780.95h0M941.3 786.75h0M941.3 792.55h0M969.3 775.15h0M969.3 780.95h0M969.3 786.75h0M969.3 792.55h0M975.0 775.15h0M975.0 780.95h0M975.0 786.75h0M975.0 792.55h0M989.0 786.75h0M989.0 792.55h0M997.3 775.15h0M997.3 780.95h0M997.3 786.75h0M997.3 792.55h0M1003.0 775.15h0M1003.0 780.95h0M1003.0 786.75h0M1003.0 792.55h0M1011.3 775.15h0M1011.3 780.95h0M1011.3 786.75h0M1011.3 792.55h0M1017.0 775.15h0M1017.0 780.95h0M1017.0 786.75h0M1017.0 792.55h0M1025.3 775.15h0M1025.3 780.95h0M1025.3 786.75h0M1025.3 792.55h0M1053.3 775.15h0M1053.3 780.95h0M1053.3 786.75h0M1053.3 792.55h0M1067.3 775.15h0M1067.3 780.95h0M1067.3 786.75h0M1067.3 792.55h0M1073.0 786.75h0M1073.0 792.55h0M1081.3 775.15h0M1081.3 780.95h0M1081.3 786.75h0M1081.3 792.55h0M1087.0 775.15h0M1087.0 780.95h0M1087.0 786.75h0M1087.0 792.55h0M1095.3 775.15h0M1095.3 780.95h0M1095.3 786.75h0M1095.3 792.55h0M1101.0 775.15h0M1101.0 780.95h0M1101.0 786.75h0M1101.0 792.55h0M1109.3 792.55h0M1115.0 775.15h0M1115.0 780.95h0M1115.0 786.75h0M1115.0 792.55h0M1123.3 775.15h0M1123.3 780.95h0M1123.3 786.75h0M1123.3 792.55h0M1129.0 775.15h0M1129.0 780.95h0M1129.0 786.75h0M1129.0 792.55h0M1137.3 775.15h0M1137.3 780.95h0M1137.3 786.75h0M1137.3 792.55h0M1143.0 775.15h0M1143.0 780.95h0M1143.0 786.75h0M1143.0 792.55h0M1151.3 775.15h0M1151.3 780.95h0M1151.3 786.75h0M1151.3 792.55h0M1157.0 775.15h0M1157.0 780.95h0M1157.0 786.75h0M1157.0 792.55h0M1165.3 775.15h0M1165.3 780.95h0M1165.3 786.75h0M1165.3 792.55h0M1171.0 780.95h0M1171.0 786.75h0M1171.0 792.55h0M1199.0 775.15h0M1199.0 780.95h0M1199.0 786.75h0M1199.0 792.55h0M1207.3 775.15h0M1207.3 780.95h0M1207.3 786.75h0M1207.3 792.55h0M1213.0 786.75h0M1213.0 792.55h0M1235.3 775.15h0M1235.3 780.95h0M1235.3 786.75h0M1235.3 792.55h0M1249.3 780.95h0M1249.3 786.75h0M1249.3 792.55h0M1255.0 786.75h0M1255.0 792.55h0M1269.0 775.15h0M1269.0 780.95h0M1269.0 786.75h0M1269.0 792.55h0M1277.3 775.15h0M1277.3 780.95h0M1277.3 786.75h0M1277.3 792.55h0M1283.0 792.55h0M471.0 809.15h0M471.0 814.95h0M471.0 820.75h0M471.0 826.55h0M479.3 809.15h0M479.3 814.95h0M479.3 820.75h0M479.3 826.55h0M485.0 809.15h0M485.0 814.95h0M485.0 820.75h0M485.0 826.55h0M499.0 809.15h0M499.0 814.95h0M499.0 820.75h0M499.0 826.55h0M513.0 809.15h0M513.0 814.95h0M513.0 820.75h0M513.0 826.55h0M521.3 809.15h0M521.3 814.95h0M521.3 820.75h0M521.3 826.55h0M527.0 809.15h0M527.0 814.95h0M527.0 820.75h0M527.0 826.55h0M535.3 809.15h0M535.3 814.95h0M535.3 820.75h0M535.3 826.55h0M541.0 826.55h0M549.3 809.15h0M549.3 814.95h0M549.3 820.75h0M549.3 826.55h0M555.0 814.95h0M555.0 820.75h0M555.0 826.55h0M563.3 809.15h0M563.3 814.95h0M563.3 820.75h0M563.3 826.55h0M569.0 809.15h0M569.0 814.95h0M569.0 820.75h0M569.0 826.55h0M577.3 814.95h0M577.3 820.75h0M577.3 826.55h0M583.0 809.15h0M583.0 814.95h0M583.0 820.75h0M583.0 826.55h0M591.3 814.95h0M591.3 820.75h0M591.3 826.55h0M597.0 826.55h0M605.3 809.15h0M605.3 814.95h0M605.3 820.75h0M605.3 826.55h0M611.0 809.15h0M611.0 814.95h0M611.0 820.75h0M611.0 826.55h0M619.3 814.95h0M619.3 820.75h0M619.3 826.55h0M625.0 809.15h0M625.0 814.95h0M625.0 820.75h0M625.0 826.55h0M633.3 809.15h0M633.3 814.95h0M633.3 820.75h0M633.3 826.55h0M639.0 820.75h0M639.0 826.55h0M647.3 809.15h0M647.3 814.95h0M647.3 820.75h0M647.3 826.55h0M653.0 809.15h0M653.0 814.95h0M653.0 820.75h0M653.0 826.55h0M661.3 809.15h0M661.3 814.95h0M661.3 820.75h0M661.3 826.55h0M667.0 809.15h0M667.0 814.95h0M667.0 820.75h0M667.0 826.55h0M675.3 809.15h0M675.3 814.95h0M675.3 820.75h0M675.3 826.55h0M681.0 809.15h0M681.0 814.95h0M681.0 820.75h0M681.0 826.55h0M689.3 809.15h0M689.3 814.95h0M689.3 820.75h0M689.3 826.55h0M695.0 809.15h0M695.0 814.95h0M695.0 820.75h0M695.0 826.55h0M709.0 809.15h0M709.0 814.95h0M709.0 820.75h0M709.0 826.55h0M717.3 809.15h0M717.3 814.95h0M717.3 820.75h0M717.3 826.55h0M723.0 809.15h0M723.0 814.95h0M723.0 820.75h0M723.0 826.55h0M731.3 809.15h0M731.3 814.95h0M731.3 820.75h0M731.3 826.55h0M737.0 809.15h0M737.0 814.95h0M737.0 820.75h0M737.0 826.55h0M745.3 809.15h0M745.3 814.95h0M745.3 820.75h0M745.3 826.55h0M751.0 809.15h0M751.0 814.95h0M751.0 820.75h0M751.0 826.55h0M765.0 809.15h0M765.0 814.95h0M765.0 820.75h0M765.0 826.55h0M773.3 809.15h0M773.3 814.95h0M773.3 820.75h0M773.3 826.55h0M779.0 809.15h0M779.0 814.95h0M779.0 820.75h0M779.0 826.55h0M787.3 814.95h0M787.3 820.75h0M787.3 826.55h0M793.0 809.15h0M793.0 814.95h0M793.0 820.75h0M793.0 826.55h0M801.3 809.15h0M801.3 814.95h0M801.3 820.75h0M801.3 826.55h0M807.0 809.15h0M807.0 814.95h0M807.0 820.75h0M807.0 826.55h0M815.3 809.15h0M815.3 814.95h0M815.3 820.75h0M815.3 826.55h0M821.0 826.55h0M829.3 809.15h0M829.3 814.95h0M829.3 820.75h0M829.3 826.55h0M835.0 809.15h0M835.0 814.95h0M835.0 820.75h0M835.0 826.55h0M843.3 809.15h0M843.3 814.95h0M843.3 820.75h0M843.3 826.55h0M849.0 809.15h0M849.0 814.95h0M849.0 820.75h0M849.0 826.55h0M857.3 809.15h0M857.3 814.95h0M857.3 820.75h0M857.3 826.55h0M863.0 809.15h0M863.0 814.95h0M863.0 820.75h0M863.0 826.55h0M871.3 809.15h0M871.3 814.95h0M871.3 820.75h0M871.3 826.55h0M877.0 809.15h0M877.0 814.95h0M877.0 820.75h0M877.0 826.55h0M885.3 809.15h0M885.3 814.95h0M885.3 820.75h0M885.3 826.55h0M891.0 809.15h0M891.0 814.95h0M891.0 820.75h0M891.0 826.55h0M899.3 809.15h0M899.3 814.95h0M899.3 820.75h0M899.3 826.55h0M905.0 809.15h0M905.0 814.95h0M905.0 820.75h0M905.0 826.55h0M913.3 809.15h0M913.3 814.95h0M913.3 820.75h0M913.3 826.55h0M919.0 809.15h0M919.0 814.95h0M919.0 820.75h0M919.0 826.55h0M927.3 826.55h0M933.0 809.15h0M933.0 814.95h0M933.0 820.75h0M933.0 826.55h0M941.3 814.95h0M941.3 820.75h0M941.3 826.55h0M947.0 814.95h0M947.0 820.75h0M947.0 826.55h0M955.3 809.15h0M955.3 814.95h0M955.3 820.75h0M955.3 826.55h0M969.3 809.15h0M969.3 814.95h0M969.3 820.75h0M969.3 826.55h0M975.0 809.15h0M975.0 814.95h0M975.0 820.75h0M975.0 826.55h0M989.0 809.15h0M989.0 814.95h0M989.0 820.75h0M989.0 826.55h0M997.3 809.15h0M997.3 814.95h0M997.3 820.75h0M997.3 826.55h0M1003.0 809.15h0M1003.0 814.95h0M1003.0 820.75h0M1003.0 826.55h0M1011.3 809.15h0M1011.3 814.95h0M1011.3 820.75h0M1011.3 826.55h0M1017.0 809.15h0M1017.0 814.95h0M1017.0 820.75h0M1017.0 826.55h0M1025.3 809.15h0M1025.3 814.95h0M1025.3 820.75h0M1025.3 826.55h0M1039.3 814.95h0M1039.3 820.75h0M1039.3 826.55h0M1045.0 814.95h0M1045.0 820.75h0M1045.0 826.55h0M1053.3 809.15h0M1053.3 814.95h0M1053.3 820.75h0M1053.3 826.55h0M1059.0 809.15h0M1059.0 814.95h0M1059.0 820.75h0M1059.0 826.55h0M1067.3 809.15h0M1067.3 814.95h0M1067.3 820.75h0M1067.3 826.55h0M1073.0 809.15h0M1073.0 814.95h0M1073.0 820.75h0M1073.0 826.55h0M1081.3 809.15h0M1081.3 814.95h0M1081.3 820.75h0M1081.3 826.55h0M1087.0 809.15h0M1087.0 814.95h0M1087.0 820.75h0M1087.0 826.55h0M1095.3 809.15h0M1095.3 814.95h0M1095.3 820.75h0M1095.3 826.55h0M1101.0 809.15h0M1101.0 814.95h0M1101.0 820.75h0M1101.0 826.55h0M1109.3 809.15h0M1109.3 814.95h0M1109.3 820.75h0M1109.3 826.55h0M1115.0 809.15h0M1115.0 814.95h0M1115.0 820.75h0M1115.0 826.55h0M1123.3 809.15h0M1123.3 814.95h0M1123.3 820.75h0M1123.3 826.55h0M1129.0 809.15h0M1129.0 814.95h0M1129.0 820.75h0M1129.0 826.55h0M1137.3 809.15h0M1137.3 814.95h0M1137.3 820.75h0M1137.3 826.55h0M1143.0 809.15h0M1143.0 814.95h0M1143.0 820.75h0M1143.0 826.55h0M1151.3 809.15h0M1151.3 814.95h0M1151.3 820.75h0M1151.3 826.55h0M1157.0 809.15h0M1157.0 814.95h0M1157.0 820.75h0M1157.0 826.55h0M1165.3 809.15h0M1165.3 814.95h0M1165.3 820.75h0M1165.3 826.55h0M1171.0 809.15h0M1171.0 814.95h0M1171.0 820.75h0M1171.0 826.55h0M1179.3 809.15h0M1179.3 814.95h0M1179.3 820.75h0M1179.3 826.55h0M1185.0 814.95h0M1185.0 820.75h0M1185.0 826.55h0M1193.3 814.95h0M1193.3 820.75h0M1193.3 826.55h0M1199.0 809.15h0M1199.0 814.95h0M1199.0 820.75h0M1199.0 826.55h0M1207.3 809.15h0M1207.3 814.95h0M1207.3 820.75h0M1207.3 826.55h0M1213.0 809.15h0M1213.0 814.95h0M1213.0 820.75h0M1213.0 826.55h0M1221.3 814.95h0M1221.3 820.75h0M1221.3 826.55h0M1227.0 814.95h0M1227.0 820.75h0M1227.0 826.55h0M1235.3 809.15h0M1235.3 814.95h0M1235.3 820.75h0M1235.3 826.55h0M1249.3 809.15h0M1249.3 814.95h0M1249.3 820.75h0M1249.3 826.55h0M1255.0 809.15h0M1255.0 814.95h0M1255.0 820.75h0M1255.0 826.55h0M1263.3 820.75h0M1263.3 826.55h0M1269.0 809.15h0M1269.0 814.95h0M1269.0 820.75h0M1269.0 826.55h0M1277.3 809.15h0M1277.3 814.95h0M1277.3 820.75h0M1277.3 826.55h0M1283.0 809.15h0M1283.0 814.95h0M1283.0 820.75h0M1283.0 826.55h0M1297.0 809.15h0M1297.0 814.95h0M1297.0 820.75h0M1297.0 826.55h0M465.3 848.95h0M465.3 854.75h0M465.3 860.55h0M471.0 843.15h0M471.0 848.95h0M471.0 854.75h0M471.0 860.55h0M479.3 843.15h0M479.3 848.95h0M479.3 854.75h0M479.3 860.55h0M485.0 843.15h0M485.0 848.95h0M485.0 854.75h0M485.0 860.55h0M499.0 843.15h0M499.0 848.95h0M499.0 854.75h0M499.0 860.55h0M507.3 848.95h0M507.3 854.75h0M507.3 860.55h0M513.0 843.15h0M513.0 848.95h0M513.0 854.75h0M513.0 860.55h0M521.3 843.15h0M521.3 848.95h0M521.3 854.75h0M521.3 860.55h0M527.0 843.15h0M527.0 848.95h0M527.0 854.75h0M527.0 860.55h0M535.3 843.15h0M535.3 848.95h0M535.3 854.75h0M535.3 860.55h0M541.0 843.15h0M541.0 848.95h0M541.0 854.75h0M541.0 860.55h0M549.3 843.15h0M549.3 848.95h0M549.3 854.75h0M549.3 860.55h0M555.0 843.15h0M555.0 848.95h0M555.0 854.75h0M555.0 860.55h0M563.3 843.15h0M563.3 848.95h0M563.3 854.75h0M563.3 860.55h0M569.0 843.15h0M569.0 848.95h0M569.0 854.75h0M569.0 860.55h0M577.3 843.15h0M577.3 848.95h0M577.3 854.75h0M577.3 860.55h0M583.0 843.15h0M583.0 848.95h0M583.0 854.75h0M583.0 860.55h0M591.3 843.15h0M591.3 848.95h0M591.3 854.75h0M591.3 860.55h0M597.0 843.15h0M597.0 848.95h0M597.0 854.75h0M597.0 860.55h0M605.3 843.15h0M605.3 848.95h0M605.3 854.75h0M605.3 860.55h0M611.0 843.15h0M611.0 848.95h0M611.0 854.75h0M611.0 860.55h0M619.3 843.15h0M619.3 848.95h0M619.3 854.75h0M619.3 860.55h0M625.0 843.15h0M625.0 848.95h0M625.0 854.75h0M625.0 860.55h0M633.3 843.15h0M633.3 848.95h0M633.3 854.75h0M633.3 860.55h0M639.0 843.15h0M639.0 848.95h0M639.0 854.75h0M639.0 860.55h0M647.3 843.15h0M647.3 848.95h0M647.3 854.75h0M647.3 860.55h0M653.0 843.15h0M653.0 848.95h0M653.0 854.75h0M653.0 860.55h0M661.3 843.15h0M661.3 848.95h0M661.3 854.75h0M661.3 860.55h0M667.0 843.15h0M667.0 848.95h0M667.0 854.75h0M667.0 860.55h0M675.3 843.15h0M675.3 848.95h0M675.3 854.75h0M675.3 860.55h0M681.0 843.15h0M681.0 848.95h0M681.0 854.75h0M681.0 860.55h0M689.3 843.15h0M689.3 848.95h0M689.3 854.75h0M689.3 860.55h0M695.0 843.15h0M695.0 848.95h0M695.0 854.75h0M695.0 860.55h0M703.3 848.95h0M703.3 854.75h0M703.3 860.55h0M709.0 843.15h0M709.0 848.95h0M709.0 854.75h0M709.0 860.55h0M717.3 843.15h0M717.3 848.95h0M717.3 854.75h0M717.3 860.55h0M723.0 843.15h0M723.0 848.95h0M723.0 854.75h0M723.0 860.55h0M731.3 843.15h0M731.3 848.95h0M731.3 854.75h0M731.3 860.55h0M737.0 843.15h0M737.0 848.95h0M737.0 854.75h0M737.0 860.55h0M745.3 843.15h0M745.3 848.95h0M745.3 854.75h0M745.3 860.55h0M751.0 843.15h0M751.0 848.95h0M751.0 854.75h0M751.0 860.55h0M759.3 843.15h0M759.3 848.95h0M759.3 854.75h0M759.3 860.55h0M765.0 843.15h0M765.0 848.95h0M765.0 854.75h0M765.0 860.55h0M773.3 843.15h0M773.3 848.95h0M773.3 854.75h0M773.3 860.55h0M779.0 843.15h0M779.0 848.95h0M779.0 854.75h0M779.0 860.55h0M787.3 843.15h0M787.3 848.95h0M787.3 854.75h0M787.3 860.55h0M793.0 843.15h0M793.0 848.95h0M793.0 854.75h0M793.0 860.55h0M801.3 843.15h0M801.3 848.95h0M801.3 854.75h0M801.3 860.55h0M807.0 843.15h0M807.0 848.95h0M807.0 854.75h0M807.0 860.55h0M815.3 843.15h0M815.3 848.95h0M815.3 854.75h0M815.3 860.55h0M821.0 843.15h0M821.0 848.95h0M821.0 854.75h0M821.0 860.55h0M829.3 843.15h0M829.3 848.95h0M829.3 854.75h0M829.3 860.55h0M835.0 843.15h0M835.0 848.95h0M835.0 854.75h0M835.0 860.55h0M843.3 843.15h0M843.3 848.95h0M843.3 854.75h0M843.3 860.55h0M849.0 843.15h0M849.0 848.95h0M849.0 854.75h0M849.0 860.55h0M857.3 843.15h0M857.3 848.95h0M857.3 854.75h0M857.3 860.55h0M863.0 843.15h0M863.0 848.95h0M863.0 854.75h0M863.0 860.55h0M871.3 843.15h0M871.3 848.95h0M871.3 854.75h0M871.3 860.55h0M877.0 843.15h0M877.0 848.95h0M877.0 854.75h0M877.0 860.55h0M885.3 843.15h0M885.3 848.95h0M885.3 854.75h0M885.3 860.55h0M891.0 843.15h0M891.0 848.95h0M891.0 854.75h0M891.0 860.55h0M899.3 843.15h0M899.3 848.95h0M899.3 854.75h0M899.3 860.55h0M905.0 843.15h0M905.0 848.95h0M905.0 854.75h0M905.0 860.55h0M913.3 843.15h0M913.3 848.95h0M913.3 854.75h0M913.3 860.55h0M919.0 843.15h0M919.0 848.95h0M919.0 854.75h0M919.0 860.55h0M927.3 843.15h0M927.3 848.95h0M927.3 854.75h0M927.3 860.55h0M933.0 843.15h0M933.0 848.95h0M933.0 854.75h0M933.0 860.55h0M941.3 843.15h0M941.3 848.95h0M941.3 854.75h0M941.3 860.55h0M947.0 843.15h0M947.0 848.95h0M947.0 854.75h0M947.0 860.55h0M955.3 843.15h0M955.3 848.95h0M955.3 854.75h0M955.3 860.55h0M961.0 860.55h0M969.3 843.15h0M969.3 848.95h0M969.3 854.75h0M969.3 860.55h0M975.0 843.15h0M975.0 848.95h0M975.0 854.75h0M975.0 860.55h0M989.0 843.15h0M989.0 848.95h0M989.0 854.75h0M989.0 860.55h0M997.3 843.15h0M997.3 848.95h0M997.3 854.75h0M997.3 860.55h0M1003.0 843.15h0M1003.0 848.95h0M1003.0 854.75h0M1003.0 860.55h0M1011.3 843.15h0M1011.3 848.95h0M1011.3 854.75h0M1011.3 860.55h0M1017.0 843.15h0M1017.0 848.95h0M1017.0 854.75h0M1017.0 860.55h0M1025.3 843.15h0M1025.3 848.95h0M1025.3 854.75h0M1025.3 860.55h0M1031.0 848.95h0M1031.0 854.75h0M1031.0 860.55h0M1039.3 843.15h0M1039.3 848.95h0M1039.3 854.75h0M1039.3 860.55h0M1045.0 843.15h0M1045.0 848.95h0M1045.0 854.75h0M1045.0 860.55h0M1053.3 843.15h0M1053.3 848.95h0M1053.3 854.75h0M1053.3 860.55h0M1059.0 843.15h0M1059.0 848.95h0M1059.0 854.75h0M1059.0 860.55h0M1067.3 843.15h0M1067.3 848.95h0M1067.3 854.75h0M1067.3 860.55h0M1073.0 843.15h0M1073.0 848.95h0M1073.0 854.75h0M1073.0 860.55h0M1081.3 843.15h0M1081.3 848.95h0M1081.3 854.75h0M1081.3 860.55h0M1087.0 843.15h0M1087.0 848.95h0M1087.0 854.75h0M1087.0 860.55h0M1095.3 843.15h0M1095.3 848.95h0M1095.3 854.75h0M1095.3 860.55h0M1101.0 843.15h0M1101.0 848.95h0M1101.0 854.75h0M1101.0 860.55h0M1109.3 843.15h0M1109.3 848.95h0M1109.3 854.75h0M1109.3 860.55h0M1115.0 843.15h0M1115.0 848.95h0M1115.0 854.75h0M1115.0 860.55h0M1123.3 843.15h0M1123.3 848.95h0M1123.3 854.75h0M1123.3 860.55h0M1129.0 843.15h0M1129.0 848.95h0M1129.0 854.75h0M1129.0 860.55h0M1137.3 843.15h0M1137.3 848.95h0M1137.3 854.75h0M1137.3 860.55h0M1143.0 843.15h0M1143.0 848.95h0M1143.0 854.75h0M1143.0 860.55h0M1151.3 843.15h0M1151.3 848.95h0M1151.3 854.75h0M1151.3 860.55h0M1157.0 843.15h0M1157.0 848.95h0M1157.0 854.75h0M1157.0 860.55h0M1165.3 843.15h0M1165.3 848.95h0M1165.3 854.75h0M1165.3 860.55h0M1171.0 843.15h0M1171.0 848.95h0M1171.0 854.75h0M1171.0 860.55h0M1179.3 843.15h0M1179.3 848.95h0M1179.3 854.75h0M1179.3 860.55h0M1185.0 843.15h0M1185.0 848.95h0M1185.0 854.75h0M1185.0 860.55h0M1193.3 843.15h0M1193.3 848.95h0M1193.3 854.75h0M1193.3 860.55h0M1199.0 843.15h0M1199.0 848.95h0M1199.0 854.75h0M1199.0 860.55h0M1207.3 843.15h0M1207.3 848.95h0M1207.3 854.75h0M1207.3 860.55h0M1213.0 843.15h0M1213.0 848.95h0M1213.0 854.75h0M1213.0 860.55h0M1221.3 843.15h0M1221.3 848.95h0M1221.3 854.75h0M1221.3 860.55h0M1227.0 843.15h0M1227.0 848.95h0M1227.0 854.75h0M1227.0 860.55h0M1235.3 843.15h0M1235.3 848.95h0M1235.3 854.75h0M1235.3 860.55h0M1241.0 848.95h0M1241.0 854.75h0M1241.0 860.55h0M1249.3 843.15h0M1249.3 848.95h0M1249.3 854.75h0M1249.3 860.55h0M1255.0 843.15h0M1255.0 848.95h0M1255.0 854.75h0M1255.0 860.55h0M1263.3 843.15h0M1263.3 848.95h0M1263.3 854.75h0M1263.3 860.55h0M1269.0 843.15h0M1269.0 848.95h0M1269.0 854.75h0M1269.0 860.55h0M1277.3 843.15h0M1277.3 848.95h0M1277.3 854.75h0M1277.3 860.55h0M1283.0 843.15h0M1283.0 848.95h0M1283.0 854.75h0M1283.0 860.55h0M1291.3 854.75h0M1291.3 860.55h0M1297.0 843.15h0M1297.0 848.95h0M1297.0 854.75h0M1297.0 860.55h0M465.3 877.15h0M465.3 882.95h0M465.3 888.75h0M465.3 894.55h0M471.0 877.15h0M471.0 882.95h0M471.0 888.75h0M471.0 894.55h0M479.3 877.15h0M479.3 882.95h0M479.3 888.75h0M479.3 894.55h0M485.0 877.15h0M485.0 882.95h0M485.0 888.75h0M485.0 894.55h0M493.3 882.95h0M493.3 888.75h0M493.3 894.55h0M499.0 877.15h0M499.0 882.95h0M499.0 888.75h0M499.0 894.55h0M507.3 877.15h0M507.3 882.95h0M507.3 888.75h0M507.3 894.55h0M513.0 877.15h0M513.0 882.95h0M513.0 888.75h0M513.0 894.55h0M521.3 877.15h0M521.3 882.95h0M521.3 888.75h0M521.3 894.55h0M527.0 877.15h0M527.0 882.95h0M527.0 888.75h0M527.0 894.55h0M535.3 877.15h0M535.3 882.95h0M535.3 888.75h0M535.3 894.55h0M541.0 877.15h0M541.0 882.95h0M541.0 888.75h0M541.0 894.55h0M549.3 877.15h0M549.3 882.95h0M549.3 888.75h0M549.3 894.55h0M555.0 877.15h0M555.0 882.95h0M555.0 888.75h0M555.0 894.55h0M563.3 877.15h0M563.3 882.95h0M563.3 888.75h0M563.3 894.55h0M569.0 877.15h0M569.0 882.95h0M569.0 888.75h0M569.0 894.55h0M577.3 877.15h0M577.3 882.95h0M577.3 888.75h0M577.3 894.55h0M583.0 877.15h0M583.0 882.95h0M583.0 888.75h0M583.0 894.55h0M591.3 877.15h0M591.3 882.95h0M591.3 888.75h0M591.3 894.55h0M597.0 877.15h0M597.0 882.95h0M597.0 888.75h0M597.0 894.55h0M605.3 877.15h0M605.3 882.95h0M605.3 888.75h0M605.3 894.55h0M611.0 877.15h0M611.0 882.95h0M611.0 888.75h0M611.0 894.55h0M619.3 877.15h0M619.3 882.95h0M619.3 888.75h0M619.3 894.55h0M625.0 877.15h0M625.0 882.95h0M625.0 888.75h0M625.0 894.55h0M633.3 877.15h0M633.3 882.95h0M633.3 888.75h0M633.3 894.55h0M639.0 877.15h0M639.0 882.95h0M639.0 888.75h0M639.0 894.55h0M647.3 877.15h0M647.3 882.95h0M647.3 888.75h0M647.3 894.55h0M653.0 877.15h0M653.0 882.95h0M653.0 888.75h0M653.0 894.55h0M661.3 877.15h0M661.3 882.95h0M661.3 888.75h0M661.3 894.55h0M667.0 877.15h0M667.0 882.95h0M667.0 888.75h0M667.0 894.55h0M675.3 877.15h0M675.3 882.95h0M675.3 888.75h0M675.3 894.55h0M681.0 877.15h0M681.0 882.95h0M681.0 888.75h0M681.0 894.55h0M689.3 877.15h0M689.3 882.95h0M689.3 888.75h0M689.3 894.55h0M695.0 877.15h0M695.0 882.95h0M695.0 888.75h0M695.0 894.55h0M703.3 877.15h0M703.3 882.95h0M703.3 888.75h0M703.3 894.55h0M709.0 877.15h0M709.0 882.95h0M709.0 888.75h0M709.0 894.55h0M717.3 877.15h0M717.3 882.95h0M717.3 888.75h0M717.3 894.55h0M723.0 877.15h0M723.0 882.95h0M723.0 888.75h0M723.0 894.55h0M731.3 877.15h0M731.3 882.95h0M731.3 888.75h0M731.3 894.55h0M737.0 877.15h0M737.0 882.95h0M737.0 888.75h0M737.0 894.55h0M745.3 877.15h0M745.3 882.95h0M745.3 888.75h0M745.3 894.55h0M751.0 877.15h0M751.0 882.95h0M751.0 888.75h0M751.0 894.55h0M759.3 877.15h0M759.3 882.95h0M759.3 888.75h0M759.3 894.55h0M765.0 877.15h0M765.0 882.95h0M765.0 888.75h0M765.0 894.55h0M773.3 877.15h0M773.3 882.95h0M773.3 888.75h0M773.3 894.55h0M779.0 877.15h0M779.0 882.95h0M779.0 888.75h0M779.0 894.55h0M787.3 877.15h0M787.3 882.95h0M787.3 888.75h0M787.3 894.55h0M793.0 877.15h0M793.0 882.95h0M793.0 888.75h0M793.0 894.55h0M801.3 877.15h0M801.3 882.95h0M801.3 888.75h0M801.3 894.55h0M807.0 877.15h0M807.0 882.95h0M807.0 888.75h0M807.0 894.55h0M815.3 877.15h0M815.3 882.95h0M815.3 888.75h0M815.3 894.55h0M821.0 877.15h0M821.0 882.95h0M821.0 888.75h0M821.0 894.55h0M829.3 877.15h0M829.3 882.95h0M829.3 888.75h0M829.3 894.55h0M835.0 877.15h0M835.0 882.95h0M835.0 888.75h0M835.0 894.55h0M843.3 877.15h0M843.3 882.95h0M843.3 888.75h0M843.3 894.55h0M849.0 877.15h0M849.0 882.95h0M849.0 888.75h0M849.0 894.55h0M857.3 877.15h0M857.3 882.95h0M857.3 888.75h0M857.3 894.55h0M863.0 877.15h0M863.0 882.95h0M863.0 888.75h0M863.0 894.55h0M871.3 877.15h0M871.3 882.95h0M871.3 888.75h0M871.3 894.55h0M877.0 877.15h0M877.0 882.95h0M877.0 888.75h0M877.0 894.55h0M885.3 877.15h0M885.3 882.95h0M885.3 888.75h0M885.3 894.55h0M891.0 877.15h0M891.0 882.95h0M891.0 888.75h0M891.0 894.55h0M899.3 877.15h0M899.3 882.95h0M899.3 888.75h0M899.3 894.55h0M905.0 877.15h0M905.0 882.95h0M905.0 888.75h0M905.0 894.55h0M913.3 877.15h0M913.3 882.95h0M913.3 888.75h0M913.3 894.55h0M919.0 877.15h0M919.0 882.95h0M919.0 888.75h0M919.0 894.55h0M927.3 877.15h0M927.3 882.95h0M927.3 888.75h0M927.3 894.55h0M933.0 877.15h0M933.0 882.95h0M933.0 888.75h0M933.0 894.55h0M941.3 877.15h0M941.3 882.95h0M941.3 888.75h0M941.3 894.55h0M947.0 877.15h0M947.0 882.95h0M947.0 888.75h0M947.0 894.55h0M955.3 877.15h0M955.3 882.95h0M955.3 888.75h0M955.3 894.55h0M961.0 877.15h0M961.0 882.95h0M961.0 888.75h0M961.0 894.55h0M969.3 877.15h0M969.3 882.95h0M969.3 888.75h0M969.3 894.55h0M975.0 877.15h0M975.0 882.95h0M975.0 888.75h0M975.0 894.55h0M989.0 877.15h0M989.0 882.95h0M989.0 888.75h0M989.0 894.55h0M997.3 877.15h0M997.3 882.95h0M997.3 888.75h0M997.3 894.55h0M1003.0 877.15h0M1003.0 882.95h0M1003.0 888.75h0M1003.0 894.55h0M1011.3 877.15h0M1011.3 882.95h0M1011.3 888.75h0M1011.3 894.55h0M1017.0 877.15h0M1017.0 882.95h0M1017.0 888.75h0M1017.0 894.55h0M1025.3 877.15h0M1025.3 882.95h0M1025.3 888.75h0M1025.3 894.55h0M1031.0 877.15h0M1031.0 882.95h0M1031.0 888.75h0M1031.0 894.55h0M1039.3 877.15h0M1039.3 882.95h0M1039.3 888.75h0M1039.3 894.55h0M1045.0 877.15h0M1045.0 882.95h0M1045.0 888.75h0M1045.0 894.55h0M1053.3 877.15h0M1053.3 882.95h0M1053.3 888.75h0M1053.3 894.55h0M1059.0 877.15h0M1059.0 882.95h0M1059.0 888.75h0M1059.0 894.55h0M1067.3 877.15h0M1067.3 882.95h0M1067.3 888.75h0M1067.3 894.55h0M1073.0 877.15h0M1073.0 882.95h0M1073.0 888.75h0M1073.0 894.55h0M1081.3 877.15h0M1081.3 882.95h0M1081.3 888.75h0M1081.3 894.55h0M1087.0 877.15h0M1087.0 882.95h0M1087.0 888.75h0M1087.0 894.55h0M1095.3 877.15h0M1095.3 882.95h0M1095.3 888.75h0M1095.3 894.55h0M1101.0 877.15h0M1101.0 882.95h0M1101.0 888.75h0M1101.0 894.55h0M1109.3 877.15h0M1109.3 882.95h0M1109.3 888.75h0M1109.3 894.55h0M1115.0 877.15h0M1115.0 882.95h0M1115.0 888.75h0M1115.0 894.55h0M1123.3 877.15h0M1123.3 882.95h0M1123.3 888.75h0M1123.3 894.55h0M1129.0 877.15h0M1129.0 882.95h0M1129.0 888.75h0M1129.0 894.55h0M1137.3 877.15h0M1137.3 882.95h0M1137.3 888.75h0M1137.3 894.55h0M1143.0 877.15h0M1143.0 882.95h0M1143.0 888.75h0M1143.0 894.55h0M1151.3 877.15h0M1151.3 882.95h0M1151.3 888.75h0M1151.3 894.55h0M1157.0 877.15h0M1157.0 882.95h0M1157.0 888.75h0M1157.0 894.55h0M1165.3 877.15h0M1165.3 882.95h0M1165.3 888.75h0M1165.3 894.55h0M1171.0 877.15h0M1171.0 882.95h0M1171.0 888.75h0M1171.0 894.55h0M1179.3 877.15h0M1179.3 882.95h0M1179.3 888.75h0M1179.3 894.55h0M1185.0 877.15h0M1185.0 882.95h0M1185.0 888.75h0M1185.0 894.55h0M1193.3 877.15h0M1193.3 882.95h0M1193.3 888.75h0M1193.3 894.55h0M1199.0 877.15h0M1199.0 882.95h0M1199.0 888.75h0M1199.0 894.55h0M1207.3 877.15h0M1207.3 882.95h0M1207.3 888.75h0M1207.3 894.55h0M1213.0 877.15h0M1213.0 882.95h0M1213.0 888.75h0M1213.0 894.55h0M1221.3 877.15h0M1221.3 882.95h0M1221.3 888.75h0M1221.3 894.55h0M1227.0 877.15h0M1227.0 882.95h0M1227.0 888.75h0M1227.0 894.55h0M1235.3 877.15h0M1235.3 882.95h0M1235.3 888.75h0M1235.3 894.55h0M1241.0 877.15h0M1241.0 882.95h0M1241.0 888.75h0M1241.0 894.55h0M1249.3 877.15h0M1249.3 882.95h0M1249.3 888.75h0M1249.3 894.55h0M1255.0 877.15h0M1255.0 882.95h0M1255.0 888.75h0M1255.0 894.55h0M1263.3 877.15h0M1263.3 882.95h0M1263.3 888.75h0M1263.3 894.55h0M1269.0 877.15h0M1269.0 882.95h0M1269.0 888.75h0M1269.0 894.55h0M1277.3 877.15h0M1277.3 882.95h0M1277.3 888.75h0M1277.3 894.55h0M1283.0 877.15h0M1283.0 882.95h0M1283.0 888.75h0M1283.0 894.55h0M1291.3 877.15h0M1291.3 882.95h0M1291.3 888.75h0M1291.3 894.55h0M1297.0 877.15h0M1297.0 882.95h0M1297.0 888.75h0M1297.0 894.55h0M465.3 911.15h0M465.3 916.95h0M465.3 922.75h0M465.3 928.55h0M471.0 911.15h0M471.0 916.95h0M471.0 922.75h0M471.0 928.55h0M479.3 911.15h0M479.3 916.95h0M479.3 922.75h0M479.3 928.55h0M485.0 911.15h0M485.0 916.95h0M485.0 922.75h0M485.0 928.55h0M493.3 911.15h0M493.3 916.95h0M493.3 922.75h0M493.3 928.55h0M499.0 911.15h0M499.0 916.95h0M499.0 922.75h0M499.0 928.55h0M507.3 911.15h0M507.3 916.95h0M507.3 922.75h0M507.3 928.55h0M513.0 911.15h0M513.0 916.95h0M513.0 922.75h0M513.0 928.55h0M521.3 911.15h0M521.3 916.95h0M521.3 922.75h0M521.3 928.55h0M527.0 911.15h0M527.0 916.95h0M527.0 922.75h0M527.0 928.55h0M535.3 911.15h0M535.3 916.95h0M535.3 922.75h0M535.3 928.55h0M541.0 911.15h0M541.0 916.95h0M541.0 922.75h0M541.0 928.55h0M549.3 911.15h0M549.3 916.95h0M549.3 922.75h0M549.3 928.55h0M555.0 911.15h0M555.0 916.95h0M555.0 922.75h0M555.0 928.55h0M563.3 911.15h0M563.3 916.95h0M563.3 922.75h0M563.3 928.55h0M569.0 911.15h0M569.0 916.95h0M569.0 922.75h0M569.0 928.55h0M577.3 911.15h0M577.3 916.95h0M577.3 922.75h0M577.3 928.55h0M583.0 911.15h0M583.0 916.95h0M583.0 922.75h0M583.0 928.55h0M591.3 911.15h0M591.3 916.95h0M591.3 922.75h0M591.3 928.55h0M597.0 911.15h0M597.0 916.95h0M597.0 922.75h0M597.0 928.55h0M605.3 911.15h0M605.3 916.95h0M605.3 922.75h0M605.3 928.55h0M611.0 911.15h0M611.0 916.95h0M611.0 922.75h0M611.0 928.55h0M619.3 911.15h0M619.3 916.95h0M619.3 922.75h0M619.3 928.55h0M625.0 911.15h0M625.0 916.95h0M625.0 922.75h0M625.0 928.55h0M633.3 911.15h0M633.3 916.95h0M633.3 922.75h0M633.3 928.55h0M639.0 911.15h0M639.0 916.95h0M639.0 922.75h0M639.0 928.55h0M647.3 911.15h0M647.3 916.95h0M647.3 922.75h0M647.3 928.55h0M653.0 911.15h0M653.0 916.95h0M653.0 922.75h0M653.0 928.55h0M661.3 911.15h0M661.3 916.95h0M661.3 922.75h0M661.3 928.55h0M667.0 911.15h0M667.0 916.95h0M667.0 922.75h0M667.0 928.55h0M675.3 911.15h0M675.3 916.95h0M675.3 922.75h0M675.3 928.55h0M681.0 911.15h0M681.0 916.95h0M681.0 922.75h0M681.0 928.55h0M689.3 911.15h0M689.3 916.95h0M689.3 922.75h0M689.3 928.55h0M695.0 911.15h0M695.0 916.95h0M695.0 922.75h0M695.0 928.55h0M703.3 911.15h0M703.3 916.95h0M703.3 922.75h0M703.3 928.55h0M709.0 911.15h0M709.0 916.95h0M709.0 922.75h0M709.0 928.55h0M717.3 911.15h0M717.3 916.95h0M717.3 922.75h0M717.3 928.55h0M723.0 911.15h0M723.0 916.95h0M723.0 922.75h0M723.0 928.55h0M731.3 911.15h0M731.3 916.95h0M731.3 922.75h0M731.3 928.55h0M737.0 911.15h0M737.0 916.95h0M737.0 922.75h0M737.0 928.55h0M745.3 911.15h0M745.3 916.95h0M745.3 922.75h0M745.3 928.55h0M751.0 911.15h0M751.0 916.95h0M751.0 922.75h0M751.0 928.55h0M759.3 911.15h0M759.3 916.95h0M759.3 922.75h0M759.3 928.55h0M765.0 911.15h0M765.0 916.95h0M765.0 922.75h0M765.0 928.55h0M773.3 911.15h0M773.3 916.95h0M773.3 922.75h0M773.3 928.55h0M779.0 911.15h0M779.0 916.95h0M779.0 922.75h0M779.0 928.55h0M787.3 911.15h0M787.3 916.95h0M787.3 922.75h0M787.3 928.55h0M793.0 911.15h0M793.0 916.95h0M793.0 922.75h0M793.0 928.55h0M801.3 911.15h0M801.3 916.95h0M801.3 922.75h0M801.3 928.55h0M807.0 911.15h0M807.0 916.95h0M807.0 922.75h0M807.0 928.55h0M815.3 911.15h0M815.3 916.95h0M815.3 922.75h0M815.3 928.55h0M821.0 911.15h0M821.0 916.95h0M821.0 922.75h0M821.0 928.55h0M829.3 911.15h0M829.3 916.95h0M829.3 922.75h0M829.3 928.55h0M835.0 911.15h0M835.0 916.95h0M835.0 922.75h0M835.0 928.55h0M843.3 911.15h0M843.3 916.95h0M843.3 922.75h0M843.3 928.55h0M849.0 911.15h0M849.0 916.95h0M849.0 922.75h0M849.0 928.55h0M857.3 911.15h0M857.3 916.95h0M857.3 922.75h0M857.3 928.55h0M863.0 911.15h0M863.0 916.95h0M863.0 922.75h0M863.0 928.55h0M871.3 911.15h0M871.3 916.95h0M871.3 922.75h0M871.3 928.55h0M877.0 911.15h0M877.0 916.95h0M877.0 922.75h0M877.0 928.55h0M885.3 911.15h0M885.3 916.95h0M885.3 922.75h0M885.3 928.55h0M891.0 911.15h0M891.0 916.95h0M891.0 922.75h0M891.0 928.55h0M899.3 911.15h0M899.3 916.95h0M899.3 922.75h0M899.3 928.55h0M905.0 911.15h0M905.0 916.95h0M905.0 922.75h0M905.0 928.55h0M913.3 911.15h0M913.3 916.95h0M913.3 922.75h0M913.3 928.55h0M919.0 911.15h0M919.0 916.95h0M919.0 922.75h0M919.0 928.55h0M927.3 911.15h0M927.3 916.95h0M927.3 922.75h0M927.3 928.55h0M933.0 911.15h0M933.0 916.95h0M933.0 922.75h0M933.0 928.55h0M941.3 911.15h0M941.3 916.95h0M941.3 922.75h0M941.3 928.55h0M947.0 911.15h0M947.0 916.95h0M947.0 922.75h0M947.0 928.55h0M955.3 911.15h0M955.3 916.95h0M955.3 922.75h0M955.3 928.55h0M961.0 911.15h0M961.0 916.95h0M961.0 922.75h0M961.0 928.55h0M969.3 911.15h0M969.3 916.95h0M969.3 922.75h0M969.3 928.55h0M975.0 911.15h0M975.0 916.95h0M975.0 922.75h0M975.0 928.55h0M983.3 911.15h0M983.3 916.95h0M983.3 922.75h0M983.3 928.55h0M989.0 911.15h0M989.0 916.95h0M989.0 922.75h0M989.0 928.55h0M997.3 911.15h0M997.3 916.95h0M997.3 922.75h0M997.3 928.55h0M1003.0 911.15h0M1003.0 916.95h0M1003.0 922.75h0M1003.0 928.55h0M1011.3 911.15h0M1011.3 916.95h0M1011.3 922.75h0M1011.3 928.55h0M1017.0 911.15h0M1017.0 916.95h0M1017.0 922.75h0M1017.0 928.55h0M1025.3 911.15h0M1025.3 916.95h0M1025.3 922.75h0M1025.3 928.55h0M1031.0 911.15h0M1031.0 916.95h0M1031.0 922.75h0M1031.0 928.55h0M1039.3 911.15h0M1039.3 916.95h0M1039.3 922.75h0M1039.3 928.55h0M1045.0 911.15h0M1045.0 916.95h0M1045.0 922.75h0M1045.0 928.55h0M1053.3 911.15h0M1053.3 916.95h0M1053.3 922.75h0M1053.3 928.55h0M1059.0 911.15h0M1059.0 916.95h0M1059.0 922.75h0M1059.0 928.55h0M1067.3 911.15h0M1067.3 916.95h0M1067.3 922.75h0M1067.3 928.55h0M1073.0 911.15h0M1073.0 916.95h0M1073.0 922.75h0M1073.0 928.55h0M1081.3 911.15h0M1081.3 916.95h0M1081.3 922.75h0M1081.3 928.55h0M1087.0 911.15h0M1087.0 916.95h0M1087.0 922.75h0M1087.0 928.55h0M1095.3 911.15h0M1095.3 916.95h0M1095.3 922.75h0M1095.3 928.55h0M1101.0 911.15h0M1101.0 916.95h0M1101.0 922.75h0M1101.0 928.55h0M1109.3 911.15h0M1109.3 916.95h0M1109.3 922.75h0M1109.3 928.55h0M1115.0 911.15h0M1115.0 916.95h0M1115.0 922.75h0M1115.0 928.55h0M1123.3 911.15h0M1123.3 916.95h0M1123.3 922.75h0M1123.3 928.55h0M1129.0 911.15h0M1129.0 916.95h0M1129.0 922.75h0M1129.0 928.55h0M1137.3 911.15h0M1137.3 916.95h0M1137.3 922.75h0M1137.3 928.55h0M1143.0 911.15h0M1143.0 916.95h0M1143.0 922.75h0M1143.0 928.55h0M1151.3 911.15h0M1151.3 916.95h0M1151.3 922.75h0M1151.3 928.55h0M1157.0 911.15h0M1157.0 916.95h0M1157.0 922.75h0M1157.0 928.55h0M1165.3 911.15h0M1165.3 916.95h0M1165.3 922.75h0M1165.3 928.55h0M1171.0 911.15h0M1171.0 916.95h0M1171.0 922.75h0M1171.0 928.55h0M1179.3 911.15h0M1179.3 916.95h0M1179.3 922.75h0M1179.3 928.55h0M1185.0 911.15h0M1185.0 916.95h0M1185.0 922.75h0M1185.0 928.55h0M1193.3 911.15h0M1193.3 916.95h0M1193.3 922.75h0M1193.3 928.55h0M1199.0 911.15h0M1199.0 916.95h0M1199.0 922.75h0M1199.0 928.55h0M1207.3 911.15h0M1207.3 916.95h0M1207.3 922.75h0M1207.3 928.55h0M1213.0 911.15h0M1213.0 916.95h0M1213.0 922.75h0M1213.0 928.55h0M1221.3 911.15h0M1221.3 916.95h0M1221.3 922.75h0M1221.3 928.55h0M1227.0 911.15h0M1227.0 916.95h0M1227.0 922.75h0M1227.0 928.55h0M1235.3 911.15h0M1235.3 916.95h0M1235.3 922.75h0M1235.3 928.55h0M1241.0 911.15h0M1241.0 916.95h0M1241.0 922.75h0M1241.0 928.55h0M1249.3 911.15h0M1249.3 916.95h0M1249.3 922.75h0M1249.3 928.55h0M1255.0 911.15h0M1255.0 916.95h0M1255.0 922.75h0M1255.0 928.55h0M1263.3 911.15h0M1263.3 916.95h0M1263.3 922.75h0M1263.3 928.55h0M1269.0 911.15h0M1269.0 916.95h0M1269.0 922.75h0M1269.0 928.55h0M1277.3 911.15h0M1277.3 916.95h0M1277.3 922.75h0M1277.3 928.55h0M1283.0 911.15h0M1283.0 916.95h0M1283.0 922.75h0M1283.0 928.55h0M1291.3 911.15h0M1291.3 916.95h0M1291.3 922.75h0M1291.3 928.55h0M1297.0 911.15h0M1297.0 916.95h0M1297.0 922.75h0M1297.0 928.55h0M465.3 945.15h0M465.3 950.95h0M465.3 956.75h0M465.3 962.55h0M471.0 945.15h0M471.0 950.95h0M471.0 956.75h0M471.0 962.55h0M479.3 945.15h0M479.3 950.95h0M479.3 956.75h0M479.3 962.55h0M485.0 945.15h0M485.0 950.95h0M485.0 956.75h0M485.0 962.55h0M493.3 945.15h0M493.3 950.95h0M493.3 956.75h0M493.3 962.55h0M499.0 945.15h0M499.0 950.95h0M499.0 956.75h0M499.0 962.55h0M507.3 945.15h0M507.3 950.95h0M507.3 956.75h0M507.3 962.55h0M513.0 945.15h0M513.0 950.95h0M513.0 956.75h0M513.0 962.55h0M521.3 945.15h0M521.3 950.95h0M521.3 956.75h0M521.3 962.55h0M527.0 945.15h0M527.0 950.95h0M527.0 956.75h0M527.0 962.55h0M535.3 945.15h0M535.3 950.95h0M535.3 956.75h0M535.3 962.55h0M541.0 945.15h0M541.0 950.95h0M541.0 956.75h0M549.3 945.15h0M549.3 950.95h0M549.3 956.75h0M549.3 962.55h0M555.0 945.15h0M555.0 950.95h0M555.0 956.75h0M555.0 962.55h0M563.3 945.15h0M563.3 950.95h0M563.3 956.75h0M563.3 962.55h0M569.0 945.15h0M569.0 950.95h0M569.0 956.75h0M569.0 962.55h0M577.3 945.15h0M577.3 950.95h0M577.3 956.75h0M577.3 962.55h0M583.0 945.15h0M583.0 950.95h0M583.0 956.75h0M583.0 962.55h0M591.3 945.15h0M591.3 950.95h0M591.3 956.75h0M591.3 962.55h0M597.0 945.15h0M597.0 950.95h0M597.0 956.75h0M597.0 962.55h0M605.3 945.15h0M605.3 950.95h0M605.3 956.75h0M605.3 962.55h0M611.0 945.15h0M611.0 950.95h0M611.0 956.75h0M611.0 962.55h0M619.3 945.15h0M619.3 950.95h0M619.3 956.75h0M619.3 962.55h0M625.0 945.15h0M625.0 950.95h0M625.0 956.75h0M625.0 962.55h0M633.3 945.15h0M633.3 950.95h0M633.3 956.75h0M633.3 962.55h0M639.0 945.15h0M639.0 950.95h0M639.0 956.75h0M639.0 962.55h0M647.3 945.15h0M647.3 950.95h0M647.3 956.75h0M647.3 962.55h0M653.0 945.15h0M653.0 950.95h0M653.0 956.75h0M653.0 962.55h0M661.3 945.15h0M667.0 945.15h0M667.0 950.95h0M667.0 956.75h0M667.0 962.55h0M675.3 945.15h0M675.3 950.95h0M675.3 956.75h0M675.3 962.55h0M681.0 945.15h0M681.0 950.95h0M681.0 956.75h0M681.0 962.55h0M689.3 945.15h0M689.3 950.95h0M689.3 956.75h0M689.3 962.55h0M695.0 945.15h0M695.0 950.95h0M695.0 956.75h0M695.0 962.55h0M703.3 945.15h0M703.3 950.95h0M703.3 956.75h0M703.3 962.55h0M709.0 945.15h0M709.0 950.95h0M709.0 956.75h0M709.0 962.55h0M717.3 945.15h0M717.3 950.95h0M717.3 956.75h0M717.3 962.55h0M723.0 945.15h0M723.0 950.95h0M723.0 956.75h0M723.0 962.55h0M731.3 945.15h0M731.3 950.95h0M731.3 956.75h0M731.3 962.55h0M737.0 945.15h0M737.0 950.95h0M737.0 956.75h0M737.0 962.55h0M745.3 945.15h0M745.3 950.95h0M745.3 956.75h0M745.3 962.55h0M751.0 945.15h0M751.0 950.95h0M751.0 956.75h0M751.0 962.55h0M759.3 945.15h0M759.3 950.95h0M759.3 956.75h0M759.3 962.55h0M765.0 945.15h0M765.0 950.95h0M765.0 956.75h0M765.0 962.55h0M773.3 945.15h0M773.3 950.95h0M773.3 956.75h0M773.3 962.55h0M779.0 945.15h0M779.0 950.95h0M779.0 956.75h0M779.0 962.55h0M787.3 945.15h0M787.3 950.95h0M787.3 956.75h0M787.3 962.55h0M793.0 945.15h0M793.0 950.95h0M793.0 956.75h0M793.0 962.55h0M801.3 945.15h0M801.3 950.95h0M801.3 956.75h0M801.3 962.55h0M807.0 945.15h0M807.0 950.95h0M807.0 956.75h0M807.0 962.55h0M815.3 945.15h0M815.3 950.95h0M815.3 956.75h0M815.3 962.55h0M821.0 945.15h0M821.0 950.95h0M821.0 956.75h0M821.0 962.55h0M829.3 945.15h0M829.3 950.95h0M829.3 956.75h0M829.3 962.55h0M835.0 945.15h0M835.0 950.95h0M835.0 956.75h0M835.0 962.55h0M843.3 945.15h0M843.3 950.95h0M843.3 956.75h0M843.3 962.55h0M849.0 945.15h0M849.0 950.95h0M849.0 956.75h0M849.0 962.55h0M857.3 945.15h0M857.3 950.95h0M857.3 956.75h0M857.3 962.55h0M863.0 945.15h0M863.0 950.95h0M863.0 956.75h0M863.0 962.55h0M871.3 945.15h0M871.3 950.95h0M871.3 956.75h0M871.3 962.55h0M877.0 945.15h0M877.0 950.95h0M877.0 956.75h0M877.0 962.55h0M885.3 945.15h0M885.3 950.95h0M885.3 956.75h0M891.0 945.15h0M891.0 950.95h0M891.0 956.75h0M891.0 962.55h0M899.3 945.15h0M899.3 950.95h0M899.3 956.75h0M899.3 962.55h0M905.0 945.15h0M905.0 950.95h0M905.0 956.75h0M905.0 962.55h0M913.3 945.15h0M913.3 950.95h0M913.3 956.75h0M913.3 962.55h0M919.0 945.15h0M919.0 950.95h0M919.0 956.75h0M919.0 962.55h0M927.3 945.15h0M927.3 950.95h0M927.3 956.75h0M927.3 962.55h0M933.0 945.15h0M933.0 950.95h0M933.0 956.75h0M933.0 962.55h0M941.3 945.15h0M941.3 950.95h0M941.3 956.75h0M941.3 962.55h0M947.0 945.15h0M947.0 950.95h0M947.0 956.75h0M947.0 962.55h0M955.3 945.15h0M955.3 950.95h0M955.3 956.75h0M955.3 962.55h0M961.0 945.15h0M961.0 950.95h0M961.0 956.75h0M961.0 962.55h0M969.3 945.15h0M969.3 950.95h0M969.3 956.75h0M969.3 962.55h0M975.0 945.15h0M975.0 950.95h0M975.0 956.75h0M975.0 962.55h0M983.3 945.15h0M983.3 950.95h0M983.3 956.75h0M983.3 962.55h0M989.0 945.15h0M989.0 950.95h0M989.0 956.75h0M989.0 962.55h0M997.3 945.15h0M997.3 950.95h0M997.3 956.75h0M997.3 962.55h0M1003.0 945.15h0M1003.0 950.95h0M1003.0 956.75h0M1003.0 962.55h0M1011.3 945.15h0M1011.3 950.95h0M1011.3 956.75h0M1011.3 962.55h0M1017.0 945.15h0M1017.0 950.95h0M1017.0 956.75h0M1017.0 962.55h0M1025.3 945.15h0M1025.3 950.95h0M1025.3 956.75h0M1025.3 962.55h0M1031.0 945.15h0M1031.0 950.95h0M1031.0 956.75h0M1031.0 962.55h0M1039.3 945.15h0M1039.3 950.95h0M1039.3 956.75h0M1039.3 962.55h0M1045.0 945.15h0M1045.0 950.95h0M1045.0 956.75h0M1045.0 962.55h0M1053.3 945.15h0M1053.3 950.95h0M1053.3 956.75h0M1053.3 962.55h0M1059.0 945.15h0M1059.0 950.95h0M1059.0 956.75h0M1059.0 962.55h0M1067.3 945.15h0M1067.3 950.95h0M1067.3 956.75h0M1067.3 962.55h0M1073.0 945.15h0M1073.0 950.95h0M1073.0 956.75h0M1073.0 962.55h0M1081.3 945.15h0M1081.3 950.95h0M1087.0 945.15h0M1087.0 950.95h0M1087.0 956.75h0M1087.0 962.55h0M1095.3 945.15h0M1095.3 950.95h0M1095.3 956.75h0M1095.3 962.55h0M1101.0 945.15h0M1101.0 950.95h0M1101.0 956.75h0M1101.0 962.55h0M1109.3 945.15h0M1109.3 950.95h0M1109.3 956.75h0M1109.3 962.55h0M1115.0 945.15h0M1115.0 950.95h0M1115.0 956.75h0M1115.0 962.55h0M1123.3 945.15h0M1123.3 950.95h0M1123.3 956.75h0M1123.3 962.55h0M1129.0 945.15h0M1129.0 950.95h0M1129.0 956.75h0M1137.3 945.15h0M1137.3 950.95h0M1137.3 956.75h0M1137.3 962.55h0M1143.0 945.15h0M1143.0 950.95h0M1143.0 956.75h0M1143.0 962.55h0M1151.3 945.15h0M1151.3 950.95h0M1151.3 956.75h0M1151.3 962.55h0M1157.0 945.15h0M1157.0 950.95h0M1157.0 956.75h0M1157.0 962.55h0M1165.3 945.15h0M1165.3 950.95h0M1165.3 956.75h0M1165.3 962.55h0M1171.0 945.15h0M1171.0 950.95h0M1171.0 956.75h0M1171.0 962.55h0M1179.3 945.15h0M1179.3 950.95h0M1179.3 956.75h0M1179.3 962.55h0M1185.0 945.15h0M1185.0 950.95h0M1185.0 956.75h0M1185.0 962.55h0M1193.3 945.15h0M1193.3 950.95h0M1193.3 956.75h0M1193.3 962.55h0M1199.0 945.15h0M1199.0 950.95h0M1199.0 956.75h0M1199.0 962.55h0M1207.3 945.15h0M1207.3 950.95h0M1207.3 956.75h0M1207.3 962.55h0M1213.0 945.15h0M1213.0 950.95h0M1213.0 956.75h0M1213.0 962.55h0M1221.3 945.15h0M1221.3 950.95h0M1221.3 956.75h0M1221.3 962.55h0M1227.0 945.15h0M1227.0 950.95h0M1227.0 956.75h0M1227.0 962.55h0M1235.3 945.15h0M1235.3 950.95h0M1235.3 956.75h0M1235.3 962.55h0M1241.0 945.15h0M1241.0 950.95h0M1241.0 956.75h0M1241.0 962.55h0M1249.3 945.15h0M1249.3 950.95h0M1249.3 956.75h0M1249.3 962.55h0M1255.0 945.15h0M1255.0 950.95h0M1255.0 956.75h0M1255.0 962.55h0M1263.3 945.15h0M1263.3 950.95h0M1263.3 956.75h0M1263.3 962.55h0M1269.0 945.15h0M1269.0 950.95h0M1269.0 956.75h0M1269.0 962.55h0M1277.3 945.15h0M1277.3 950.95h0M1277.3 956.75h0M1277.3 962.55h0M1283.0 945.15h0M1283.0 950.95h0M1283.0 956.75h0M1283.0 962.55h0M1291.3 945.15h0M1291.3 950.95h0M1291.3 956.75h0M1291.3 962.55h0M1297.0 945.15h0M1297.0 950.95h0M1297.0 956.75h0M1297.0 962.55h0M465.3 979.15h0M465.3 984.95h0M465.3 990.75h0M465.3 996.55h0M471.0 979.15h0M471.0 984.95h0M471.0 990.75h0M471.0 996.55h0M479.3 979.15h0M479.3 984.95h0M479.3 990.75h0M479.3 996.55h0M485.0 979.15h0M485.0 984.95h0M485.0 990.75h0M485.0 996.55h0M493.3 979.15h0M493.3 984.95h0M493.3 990.75h0M493.3 996.55h0M499.0 979.15h0M499.0 984.95h0M499.0 990.75h0M499.0 996.55h0M507.3 979.15h0M507.3 984.95h0M507.3 990.75h0M507.3 996.55h0M513.0 979.15h0M513.0 984.95h0M513.0 990.75h0M513.0 996.55h0M521.3 979.15h0M521.3 984.95h0M521.3 990.75h0M521.3 996.55h0M527.0 979.15h0M527.0 984.95h0M527.0 990.75h0M527.0 996.55h0M535.3 979.15h0M535.3 984.95h0M535.3 990.75h0M535.3 996.55h0M555.0 979.15h0M555.0 984.95h0M555.0 990.75h0M555.0 996.55h0M563.3 979.15h0M563.3 984.95h0M563.3 990.75h0M563.3 996.55h0M569.0 979.15h0M569.0 984.95h0M569.0 990.75h0M569.0 996.55h0M577.3 979.15h0M577.3 984.95h0M577.3 990.75h0M577.3 996.55h0M583.0 979.15h0M583.0 984.95h0M583.0 990.75h0M583.0 996.55h0M591.3 979.15h0M591.3 984.95h0M591.3 990.75h0M591.3 996.55h0M597.0 979.15h0M597.0 984.95h0M597.0 990.75h0M597.0 996.55h0M605.3 979.15h0M605.3 984.95h0M605.3 990.75h0M605.3 996.55h0M611.0 979.15h0M611.0 984.95h0M611.0 990.75h0M611.0 996.55h0M619.3 979.15h0M619.3 984.95h0M619.3 990.75h0M619.3 996.55h0M625.0 979.15h0M625.0 984.95h0M625.0 990.75h0M625.0 996.55h0M633.3 979.15h0M633.3 984.95h0M633.3 990.75h0M633.3 996.55h0M639.0 979.15h0M639.0 984.95h0M639.0 990.75h0M639.0 996.55h0M647.3 979.15h0M647.3 984.95h0M647.3 990.75h0M647.3 996.55h0M653.0 979.15h0M653.0 984.95h0M653.0 990.75h0M653.0 996.55h0M667.0 979.15h0M667.0 984.95h0M667.0 990.75h0M667.0 996.55h0M675.3 979.15h0M675.3 984.95h0M675.3 990.75h0M675.3 996.55h0M689.3 979.15h0M689.3 984.95h0M689.3 990.75h0M689.3 996.55h0M695.0 979.15h0M695.0 984.95h0M695.0 990.75h0M703.3 979.15h0M703.3 984.95h0M703.3 990.75h0M703.3 996.55h0M709.0 979.15h0M709.0 984.95h0M717.3 979.15h0M717.3 984.95h0M717.3 990.75h0M717.3 996.55h0M723.0 979.15h0M723.0 984.95h0M723.0 990.75h0M723.0 996.55h0M731.3 979.15h0M731.3 984.95h0M731.3 990.75h0M731.3 996.55h0M737.0 979.15h0M737.0 984.95h0M737.0 990.75h0M737.0 996.55h0M745.3 979.15h0M745.3 984.95h0M745.3 990.75h0M745.3 996.55h0M751.0 979.15h0M751.0 984.95h0M751.0 990.75h0M751.0 996.55h0M759.3 979.15h0M759.3 984.95h0M759.3 990.75h0M759.3 996.55h0M765.0 979.15h0M765.0 984.95h0M765.0 990.75h0M765.0 996.55h0M773.3 979.15h0M773.3 984.95h0M773.3 990.75h0M773.3 996.55h0M779.0 979.15h0M779.0 984.95h0M779.0 990.75h0M779.0 996.55h0M787.3 979.15h0M787.3 984.95h0M787.3 990.75h0M787.3 996.55h0M793.0 979.15h0M793.0 984.95h0M793.0 990.75h0M793.0 996.55h0M801.3 979.15h0M801.3 984.95h0M801.3 990.75h0M801.3 996.55h0M807.0 979.15h0M807.0 984.95h0M807.0 990.75h0M807.0 996.55h0M815.3 979.15h0M815.3 984.95h0M815.3 990.75h0M815.3 996.55h0M821.0 979.15h0M821.0 984.95h0M821.0 990.75h0M821.0 996.55h0M829.3 979.15h0M829.3 984.95h0M829.3 990.75h0M829.3 996.55h0M835.0 979.15h0M835.0 984.95h0M835.0 990.75h0M835.0 996.55h0M843.3 979.15h0M843.3 984.95h0M843.3 990.75h0M843.3 996.55h0M849.0 979.15h0M849.0 984.95h0M849.0 990.75h0M849.0 996.55h0M863.0 979.15h0M871.3 979.15h0M871.3 984.95h0M877.0 979.15h0M877.0 984.95h0M877.0 990.75h0M877.0 996.55h0M891.0 979.15h0M891.0 984.95h0M891.0 990.75h0M891.0 996.55h0M899.3 979.15h0M899.3 984.95h0M899.3 990.75h0M899.3 996.55h0M905.0 979.15h0M905.0 984.95h0M905.0 990.75h0M905.0 996.55h0M913.3 979.15h0M913.3 984.95h0M913.3 990.75h0M913.3 996.55h0M919.0 979.15h0M919.0 984.95h0M919.0 990.75h0M919.0 996.55h0M927.3 979.15h0M927.3 984.95h0M927.3 990.75h0M933.0 979.15h0M933.0 984.95h0M933.0 990.75h0M933.0 996.55h0M941.3 979.15h0M941.3 984.95h0M941.3 990.75h0M941.3 996.55h0M947.0 979.15h0M947.0 984.95h0M947.0 990.75h0M947.0 996.55h0M955.3 979.15h0M955.3 984.95h0M955.3 990.75h0M955.3 996.55h0M961.0 979.15h0M969.3 979.15h0M969.3 984.95h0M969.3 990.75h0M975.0 979.15h0M975.0 984.95h0M975.0 990.75h0M983.3 979.15h0M983.3 984.95h0M983.3 990.75h0M983.3 996.55h0M989.0 979.15h0M989.0 984.95h0M989.0 990.75h0M989.0 996.55h0M997.3 979.15h0M997.3 984.95h0M997.3 990.75h0M997.3 996.55h0M1003.0 979.15h0M1003.0 984.95h0M1003.0 990.75h0M1003.0 996.55h0M1011.3 979.15h0M1011.3 984.95h0M1011.3 990.75h0M1011.3 996.55h0M1017.0 979.15h0M1017.0 984.95h0M1017.0 990.75h0M1017.0 996.55h0M1025.3 979.15h0M1025.3 984.95h0M1025.3 990.75h0M1025.3 996.55h0M1031.0 979.15h0M1031.0 984.95h0M1031.0 990.75h0M1031.0 996.55h0M1039.3 979.15h0M1039.3 984.95h0M1039.3 990.75h0M1039.3 996.55h0M1045.0 979.15h0M1045.0 984.95h0M1045.0 990.75h0M1045.0 996.55h0M1053.3 979.15h0M1053.3 984.95h0M1053.3 990.75h0M1053.3 996.55h0M1059.0 979.15h0M1059.0 984.95h0M1059.0 990.75h0M1059.0 996.55h0M1067.3 979.15h0M1067.3 984.95h0M1067.3 990.75h0M1067.3 996.55h0M1073.0 979.15h0M1073.0 984.95h0M1073.0 990.75h0M1073.0 996.55h0M1087.0 979.15h0M1087.0 984.95h0M1087.0 990.75h0M1087.0 996.55h0M1095.3 979.15h0M1095.3 984.95h0M1095.3 990.75h0M1095.3 996.55h0M1101.0 979.15h0M1101.0 984.95h0M1101.0 990.75h0M1101.0 996.55h0M1109.3 979.15h0M1109.3 984.95h0M1109.3 990.75h0M1109.3 996.55h0M1115.0 979.15h0M1115.0 984.95h0M1115.0 990.75h0M1115.0 996.55h0M1123.3 979.15h0M1123.3 984.95h0M1123.3 990.75h0M1123.3 996.55h0M1137.3 979.15h0M1137.3 984.95h0M1137.3 990.75h0M1137.3 996.55h0M1143.0 979.15h0M1143.0 984.95h0M1143.0 990.75h0M1143.0 996.55h0M1151.3 979.15h0M1151.3 984.95h0M1151.3 990.75h0M1151.3 996.55h0M1157.0 979.15h0M1157.0 984.95h0M1157.0 990.75h0M1157.0 996.55h0M1165.3 979.15h0M1165.3 984.95h0M1165.3 990.75h0M1165.3 996.55h0M1171.0 979.15h0M1171.0 984.95h0M1171.0 990.75h0M1171.0 996.55h0M1179.3 979.15h0M1179.3 984.95h0M1179.3 990.75h0M1179.3 996.55h0M1185.0 979.15h0M1185.0 984.95h0M1193.3 979.15h0M1193.3 984.95h0M1193.3 990.75h0M1193.3 996.55h0M1207.3 979.15h0M1207.3 984.95h0M1207.3 990.75h0M1207.3 996.55h0M1213.0 979.15h0M1213.0 984.95h0M1213.0 990.75h0M1213.0 996.55h0M1221.3 979.15h0M1227.0 979.15h0M1227.0 984.95h0M1227.0 990.75h0M1227.0 996.55h0M1235.3 979.15h0M1235.3 984.95h0M1235.3 990.75h0M1235.3 996.55h0M1241.0 979.15h0M1241.0 984.95h0M1241.0 990.75h0M1241.0 996.55h0M1249.3 979.15h0M1249.3 984.95h0M1249.3 990.75h0M1249.3 996.55h0M1255.0 979.15h0M1255.0 984.95h0M1255.0 990.75h0M1255.0 996.55h0M1263.3 979.15h0M1263.3 984.95h0M1263.3 990.75h0M1263.3 996.55h0M1269.0 979.15h0M1269.0 984.95h0M1269.0 990.75h0M1269.0 996.55h0M1277.3 979.15h0M1277.3 984.95h0M1277.3 990.75h0M1277.3 996.55h0M1283.0 979.15h0M1283.0 984.95h0M1283.0 990.75h0M1283.0 996.55h0M1291.3 979.15h0M1291.3 984.95h0M1291.3 990.75h0M1291.3 996.55h0M1297.0 979.15h0M1297.0 984.95h0M1297.0 990.75h0M1297.0 996.55h0M465.3 1013.15h0M465.3 1018.95h0M465.3 1024.75h0M465.3 1030.55h0M471.0 1013.15h0M471.0 1018.95h0M471.0 1024.75h0M471.0 1030.55h0M479.3 1013.15h0M479.3 1018.95h0M479.3 1024.75h0M479.3 1030.55h0M485.0 1013.15h0M485.0 1018.95h0M485.0 1024.75h0M485.0 1030.55h0M493.3 1013.15h0M493.3 1018.95h0M493.3 1024.75h0M493.3 1030.55h0M499.0 1013.15h0M499.0 1018.95h0M499.0 1024.75h0M499.0 1030.55h0M507.3 1013.15h0M507.3 1018.95h0M507.3 1024.75h0M507.3 1030.55h0M513.0 1013.15h0M513.0 1018.95h0M513.0 1024.75h0M513.0 1030.55h0M521.3 1013.15h0M521.3 1018.95h0M521.3 1024.75h0M521.3 1030.55h0M527.0 1013.15h0M527.0 1018.95h0M527.0 1024.75h0M527.0 1030.55h0M535.3 1013.15h0M535.3 1018.95h0M535.3 1024.75h0M535.3 1030.55h0M569.0 1013.15h0M569.0 1018.95h0M569.0 1024.75h0M569.0 1030.55h0M577.3 1013.15h0M577.3 1018.95h0M577.3 1024.75h0M577.3 1030.55h0M583.0 1013.15h0M583.0 1018.95h0M583.0 1024.75h0M583.0 1030.55h0M591.3 1013.15h0M591.3 1018.95h0M591.3 1024.75h0M591.3 1030.55h0M597.0 1013.15h0M597.0 1018.95h0M605.3 1013.15h0M605.3 1018.95h0M605.3 1024.75h0M605.3 1030.55h0M611.0 1013.15h0M611.0 1018.95h0M611.0 1024.75h0M611.0 1030.55h0M619.3 1013.15h0M619.3 1018.95h0M619.3 1024.75h0M619.3 1030.55h0M625.0 1013.15h0M625.0 1018.95h0M625.0 1024.75h0M625.0 1030.55h0M633.3 1013.15h0M633.3 1018.95h0M633.3 1024.75h0M633.3 1030.55h0M639.0 1013.15h0M639.0 1018.95h0M639.0 1024.75h0M647.3 1013.15h0M647.3 1018.95h0M647.3 1024.75h0M647.3 1030.55h0M653.0 1013.15h0M667.0 1013.15h0M667.0 1018.95h0M667.0 1024.75h0M667.0 1030.55h0M675.3 1013.15h0M675.3 1018.95h0M675.3 1024.75h0M675.3 1030.55h0M689.3 1013.15h0M689.3 1018.95h0M689.3 1024.75h0M689.3 1030.55h0M703.3 1013.15h0M703.3 1018.95h0M703.3 1024.75h0M703.3 1030.55h0M717.3 1013.15h0M717.3 1018.95h0M717.3 1024.75h0M717.3 1030.55h0M723.0 1013.15h0M731.3 1013.15h0M731.3 1018.95h0M731.3 1024.75h0M731.3 1030.55h0M745.3 1013.15h0M745.3 1018.95h0M745.3 1024.75h0M745.3 1030.55h0M751.0 1013.15h0M759.3 1013.15h0M759.3 1018.95h0M759.3 1024.75h0M759.3 1030.55h0M765.0 1013.15h0M765.0 1018.95h0M765.0 1024.75h0M765.0 1030.55h0M773.3 1013.15h0M773.3 1018.95h0M773.3 1024.75h0M773.3 1030.55h0M779.0 1013.15h0M779.0 1018.95h0M779.0 1024.75h0M779.0 1030.55h0M787.3 1013.15h0M787.3 1018.95h0M793.0 1013.15h0M793.0 1018.95h0M793.0 1024.75h0M793.0 1030.55h0M801.3 1013.15h0M801.3 1018.95h0M801.3 1024.75h0M807.0 1013.15h0M807.0 1018.95h0M807.0 1024.75h0M807.0 1030.55h0M815.3 1013.15h0M815.3 1018.95h0M815.3 1024.75h0M815.3 1030.55h0M821.0 1013.15h0M821.0 1018.95h0M821.0 1024.75h0M821.0 1030.55h0M829.3 1013.15h0M829.3 1018.95h0M829.3 1024.75h0M829.3 1030.55h0M835.0 1013.15h0M835.0 1018.95h0M835.0 1024.75h0M849.0 1013.15h0M849.0 1018.95h0M849.0 1024.75h0M849.0 1030.55h0M877.0 1013.15h0M877.0 1018.95h0M877.0 1024.75h0M877.0 1030.55h0M891.0 1013.15h0M891.0 1018.95h0M891.0 1024.75h0M891.0 1030.55h0M899.3 1013.15h0M899.3 1018.95h0M899.3 1024.75h0M899.3 1030.55h0M905.0 1013.15h0M905.0 1018.95h0M905.0 1024.75h0M913.3 1013.15h0M913.3 1018.95h0M913.3 1024.75h0M913.3 1030.55h0M919.0 1013.15h0M919.0 1018.95h0M919.0 1024.75h0M933.0 1013.15h0M933.0 1018.95h0M933.0 1024.75h0M933.0 1030.55h0M941.3 1013.15h0M941.3 1018.95h0M941.3 1024.75h0M941.3 1030.55h0M947.0 1013.15h0M947.0 1018.95h0M947.0 1024.75h0M955.3 1013.15h0M955.3 1018.95h0M955.3 1024.75h0M955.3 1030.55h0M983.3 1013.15h0M983.3 1018.95h0M983.3 1024.75h0M983.3 1030.55h0M989.0 1013.15h0M989.0 1018.95h0M989.0 1024.75h0M989.0 1030.55h0M997.3 1013.15h0M997.3 1018.95h0M997.3 1024.75h0M997.3 1030.55h0M1003.0 1013.15h0M1003.0 1018.95h0M1003.0 1024.75h0M1011.3 1013.15h0M1011.3 1018.95h0M1017.0 1013.15h0M1017.0 1018.95h0M1025.3 1013.15h0M1025.3 1018.95h0M1025.3 1024.75h0M1025.3 1030.55h0M1031.0 1013.15h0M1031.0 1018.95h0M1031.0 1024.75h0M1031.0 1030.55h0M1039.3 1013.15h0M1039.3 1018.95h0M1039.3 1024.75h0M1039.3 1030.55h0M1045.0 1013.15h0M1045.0 1018.95h0M1045.0 1024.75h0M1045.0 1030.55h0M1053.3 1013.15h0M1053.3 1018.95h0M1053.3 1024.75h0M1053.3 1030.55h0M1059.0 1013.15h0M1059.0 1018.95h0M1059.0 1024.75h0M1059.0 1030.55h0M1067.3 1013.15h0M1067.3 1018.95h0M1067.3 1024.75h0M1073.0 1013.15h0M1073.0 1018.95h0M1073.0 1024.75h0M1073.0 1030.55h0M1087.0 1013.15h0M1087.0 1018.95h0M1087.0 1024.75h0M1095.3 1013.15h0M1095.3 1018.95h0M1095.3 1024.75h0M1095.3 1030.55h0M1101.0 1013.15h0M1101.0 1018.95h0M1101.0 1024.75h0M1101.0 1030.55h0M1109.3 1013.15h0M1109.3 1018.95h0M1109.3 1024.75h0M1109.3 1030.55h0M1115.0 1013.15h0M1115.0 1018.95h0M1115.0 1024.75h0M1115.0 1030.55h0M1123.3 1013.15h0M1123.3 1018.95h0M1123.3 1024.75h0M1123.3 1030.55h0M1137.3 1013.15h0M1137.3 1018.95h0M1137.3 1024.75h0M1137.3 1030.55h0M1143.0 1013.15h0M1143.0 1018.95h0M1143.0 1024.75h0M1143.0 1030.55h0M1151.3 1013.15h0M1151.3 1018.95h0M1151.3 1024.75h0M1151.3 1030.55h0M1157.0 1013.15h0M1157.0 1018.95h0M1165.3 1013.15h0M1165.3 1018.95h0M1165.3 1024.75h0M1165.3 1030.55h0M1171.0 1013.15h0M1171.0 1018.95h0M1171.0 1024.75h0M1171.0 1030.55h0M1179.3 1013.15h0M1179.3 1018.95h0M1179.3 1024.75h0M1179.3 1030.55h0M1193.3 1013.15h0M1193.3 1018.95h0M1193.3 1024.75h0M1193.3 1030.55h0M1207.3 1013.15h0M1207.3 1018.95h0M1207.3 1024.75h0M1207.3 1030.55h0M1227.0 1013.15h0M1227.0 1018.95h0M1227.0 1024.75h0M1227.0 1030.55h0M1235.3 1013.15h0M1235.3 1018.95h0M1235.3 1024.75h0M1235.3 1030.55h0M1241.0 1013.15h0M1241.0 1018.95h0M1241.0 1024.75h0M1241.0 1030.55h0M1249.3 1013.15h0M1249.3 1018.95h0M1249.3 1024.75h0M1249.3 1030.55h0M1255.0 1013.15h0M1255.0 1018.95h0M1255.0 1024.75h0M1255.0 1030.55h0M1263.3 1013.15h0M1263.3 1018.95h0M1263.3 1024.75h0M1269.0 1013.15h0M1269.0 1018.95h0M1277.3 1013.15h0M1277.3 1018.95h0M1277.3 1024.75h0M1277.3 1030.55h0M1283.0 1013.15h0M1283.0 1018.95h0M1283.0 1024.75h0M1283.0 1030.55h0M1291.3 1013.15h0M1291.3 1018.95h0M1291.3 1024.75h0M1291.3 1030.55h0M1297.0 1013.15h0M1297.0 1018.95h0M1297.0 1024.75h0M1297.0 1030.55h0M465.3 1047.15h0M465.3 1052.95h0M465.3 1058.75h0M465.3 1064.55h0M471.0 1047.15h0M471.0 1052.95h0M471.0 1058.75h0M471.0 1064.55h0M479.3 1047.15h0M479.3 1052.95h0M479.3 1058.75h0M479.3 1064.55h0M485.0 1047.15h0M485.0 1052.95h0M485.0 1058.75h0M493.3 1047.15h0M493.3 1052.95h0M493.3 1058.75h0M493.3 1064.55h0M507.3 1047.15h0M507.3 1052.95h0M507.3 1058.75h0M507.3 1064.55h0M513.0 1047.15h0M521.3 1047.15h0M521.3 1052.95h0M521.3 1058.75h0M521.3 1064.55h0M527.0 1047.15h0M527.0 1052.95h0M527.0 1058.75h0M527.0 1064.55h0M535.3 1047.15h0M535.3 1052.95h0M535.3 1058.75h0M535.3 1064.55h0M569.0 1047.15h0M569.0 1052.95h0M569.0 1058.75h0M569.0 1064.55h0M577.3 1047.15h0M577.3 1052.95h0M577.3 1058.75h0M577.3 1064.55h0M583.0 1047.15h0M583.0 1052.95h0M583.0 1058.75h0M583.0 1064.55h0M591.3 1047.15h0M591.3 1052.95h0M591.3 1058.75h0M591.3 1064.55h0M605.3 1047.15h0M605.3 1052.95h0M605.3 1058.75h0M605.3 1064.55h0M611.0 1047.15h0M611.0 1052.95h0M611.0 1058.75h0M619.3 1047.15h0M619.3 1052.95h0M619.3 1058.75h0M625.0 1047.15h0M625.0 1052.95h0M633.3 1047.15h0M633.3 1052.95h0M647.3 1047.15h0M647.3 1052.95h0M647.3 1058.75h0M647.3 1064.55h0M667.0 1047.15h0M667.0 1052.95h0M667.0 1058.75h0M667.0 1064.55h0M675.3 1047.15h0M675.3 1052.95h0M675.3 1058.75h0M675.3 1064.55h0M689.3 1047.15h0M703.3 1047.15h0M703.3 1052.95h0M703.3 1058.75h0M703.3 1064.55h0M717.3 1047.15h0M717.3 1052.95h0M717.3 1058.75h0M717.3 1064.55h0M731.3 1047.15h0M731.3 1052.95h0M731.3 1058.75h0M731.3 1064.55h0M745.3 1047.15h0M745.3 1052.95h0M745.3 1058.75h0M759.3 1047.15h0M759.3 1052.95h0M759.3 1058.75h0M765.0 1047.15h0M765.0 1052.95h0M765.0 1058.75h0M765.0 1064.55h0M773.3 1047.15h0M773.3 1052.95h0M773.3 1058.75h0M773.3 1064.55h0M779.0 1047.15h0M779.0 1052.95h0M793.0 1047.15h0M793.0 1052.95h0M793.0 1058.75h0M793.0 1064.55h0M807.0 1047.15h0M807.0 1052.95h0M807.0 1058.75h0M807.0 1064.55h0M815.3 1047.15h0M815.3 1052.95h0M815.3 1058.75h0M815.3 1064.55h0M821.0 1047.15h0M821.0 1052.95h0M821.0 1058.75h0M821.0 1064.55h0M829.3 1047.15h0M829.3 1052.95h0M829.3 1058.75h0M829.3 1064.55h0M849.0 1047.15h0M849.0 1052.95h0M877.0 1047.15h0M877.0 1052.95h0M877.0 1058.75h0M877.0 1064.55h0M891.0 1047.15h0M891.0 1052.95h0M899.3 1047.15h0M899.3 1052.95h0M899.3 1058.75h0M899.3 1064.55h0M913.3 1047.15h0M913.3 1052.95h0M913.3 1058.75h0M933.0 1047.15h0M933.0 1052.95h0M933.0 1058.75h0M933.0 1064.55h0M941.3 1047.15h0M941.3 1052.95h0M955.3 1047.15h0M955.3 1052.95h0M955.3 1058.75h0M955.3 1064.55h0M983.3 1047.15h0M983.3 1052.95h0M983.3 1058.75h0M983.3 1064.55h0M989.0 1047.15h0M989.0 1052.95h0M989.0 1058.75h0M989.0 1064.55h0M997.3 1047.15h0M997.3 1052.95h0M1025.3 1047.15h0M1025.3 1052.95h0M1025.3 1058.75h0M1025.3 1064.55h0M1031.0 1047.15h0M1031.0 1052.95h0M1031.0 1058.75h0M1031.0 1064.55h0M1039.3 1047.15h0M1039.3 1052.95h0M1039.3 1058.75h0M1039.3 1064.55h0M1045.0 1047.15h0M1045.0 1052.95h0M1045.0 1058.75h0M1045.0 1064.55h0M1053.3 1047.15h0M1053.3 1052.95h0M1053.3 1058.75h0M1053.3 1064.55h0M1059.0 1047.15h0M1059.0 1052.95h0M1059.0 1058.75h0M1059.0 1064.55h0M1073.0 1047.15h0M1073.0 1052.95h0M1073.0 1058.75h0M1073.0 1064.55h0M1095.3 1047.15h0M1095.3 1052.95h0M1095.3 1058.75h0M1101.0 1047.15h0M1109.3 1047.15h0M1109.3 1052.95h0M1109.3 1058.75h0M1109.3 1064.55h0M1115.0 1047.15h0M1115.0 1052.95h0M1115.0 1058.75h0M1115.0 1064.55h0M1123.3 1047.15h0M1137.3 1047.15h0M1137.3 1052.95h0M1137.3 1058.75h0M1137.3 1064.55h0M1143.0 1047.15h0M1143.0 1052.95h0M1143.0 1058.75h0M1151.3 1047.15h0M1151.3 1052.95h0M1151.3 1058.75h0M1151.3 1064.55h0M1165.3 1047.15h0M1165.3 1052.95h0M1165.3 1058.75h0M1165.3 1064.55h0M1171.0 1047.15h0M1171.0 1052.95h0M1171.0 1058.75h0M1171.0 1064.55h0M1179.3 1047.15h0M1179.3 1052.95h0M1179.3 1058.75h0M1179.3 1064.55h0M1193.3 1047.15h0M1193.3 1052.95h0M1193.3 1058.75h0M1207.3 1047.15h0M1207.3 1052.95h0M1207.3 1058.75h0M1207.3 1064.55h0M1235.3 1047.15h0M1235.3 1052.95h0M1235.3 1058.75h0M1235.3 1064.55h0M1241.0 1047.15h0M1241.0 1052.95h0M1241.0 1058.75h0M1241.0 1064.55h0M1249.3 1047.15h0M1249.3 1052.95h0M1249.3 1058.75h0M1249.3 1064.55h0M1255.0 1047.15h0M1255.0 1052.95h0M1255.0 1058.75h0M1255.0 1064.55h0M1277.3 1047.15h0M1277.3 1052.95h0M1277.3 1058.75h0M1277.3 1064.55h0M1283.0 1047.15h0M1283.0 1052.95h0M1283.0 1058.75h0M1283.0 1064.55h0M1291.3 1047.15h0M1291.3 1052.95h0M1291.3 1058.75h0M1291.3 1064.55h0M1297.0 1047.15h0M1297.0 1052.95h0M1297.0 1058.75h0M1297.0 1064.55h0M465.3 1081.15h0M465.3 1086.95h0M465.3 1092.75h0M465.3 1098.55h0M471.0 1081.15h0M471.0 1086.95h0M471.0 1092.75h0M471.0 1098.55h0M479.3 1081.15h0M479.3 1086.95h0M479.3 1092.75h0M479.3 1098.55h0M493.3 1081.15h0M493.3 1086.95h0M493.3 1092.75h0M493.3 1098.55h0M507.3 1081.15h0M521.3 1081.15h0M521.3 1086.95h0M521.3 1092.75h0M527.0 1081.15h0M527.0 1086.95h0M527.0 1092.75h0M527.0 1098.55h0M535.3 1081.15h0M535.3 1086.95h0M535.3 1092.75h0M535.3 1098.55h0M569.0 1081.15h0M569.0 1086.95h0M569.0 1092.75h0M577.3 1081.15h0M577.3 1086.95h0M577.3 1092.75h0M583.0 1081.15h0M583.0 1086.95h0M591.3 1081.15h0M591.3 1086.95h0M591.3 1092.75h0M591.3 1098.55h0M605.3 1081.15h0M605.3 1086.95h0M605.3 1092.75h0M605.3 1098.55h0M647.3 1081.15h0M647.3 1086.95h0M647.3 1092.75h0M647.3 1098.55h0M703.3 1081.15h0M703.3 1086.95h0M703.3 1092.75h0M703.3 1098.55h0M731.3 1081.15h0M731.3 1086.95h0M731.3 1092.75h0M731.3 1098.55h0M765.0 1081.15h0M765.0 1086.95h0M765.0 1092.75h0M765.0 1098.55h0M773.3 1081.15h0M793.0 1081.15h0M793.0 1086.95h0M793.0 1092.75h0M793.0 1098.55h0M807.0 1081.15h0M807.0 1086.95h0M815.3 1081.15h0M815.3 1086.95h0M815.3 1092.75h0M815.3 1098.55h0M829.3 1081.15h0M829.3 1086.95h0M899.3 1081.15h0M899.3 1086.95h0M899.3 1092.75h0M899.3 1098.55h0M933.0 1081.15h0M933.0 1086.95h0M933.0 1092.75h0M933.0 1098.55h0M955.3 1081.15h0M955.3 1086.95h0M955.3 1092.75h0M955.3 1098.55h0M983.3 1081.15h0M983.3 1086.95h0M989.0 1081.15h0M989.0 1086.95h0M1025.3 1081.15h0M1025.3 1086.95h0M1025.3 1092.75h0M1025.3 1098.55h0M1031.0 1081.15h0M1031.0 1086.95h0M1031.0 1092.75h0M1031.0 1098.55h0M1039.3 1081.15h0M1039.3 1086.95h0M1039.3 1092.75h0M1045.0 1081.15h0M1045.0 1086.95h0M1045.0 1092.75h0M1045.0 1098.55h0M1053.3 1081.15h0M1053.3 1086.95h0M1059.0 1081.15h0M1059.0 1086.95h0M1059.0 1092.75h0M1059.0 1098.55h0M1109.3 1081.15h0M1109.3 1086.95h0M1109.3 1092.75h0M1109.3 1098.55h0M1115.0 1081.15h0M1115.0 1086.95h0M1115.0 1092.75h0M1115.0 1098.55h0M1137.3 1081.15h0M1165.3 1081.15h0M1171.0 1081.15h0M1179.3 1081.15h0M1179.3 1086.95h0M1179.3 1092.75h0M1179.3 1098.55h0M1207.3 1081.15h0M1207.3 1086.95h0M1207.3 1092.75h0M1207.3 1098.55h0M1235.3 1081.15h0M1235.3 1086.95h0M1235.3 1092.75h0M1235.3 1098.55h0M1249.3 1081.15h0M1249.3 1086.95h0M1255.0 1081.15h0M1255.0 1086.95h0M1255.0 1092.75h0M1255.0 1098.55h0M1277.3 1081.15h0M1277.3 1086.95h0M1277.3 1092.75h0M1277.3 1098.55h0M1283.0 1081.15h0M1283.0 1086.95h0M1283.0 1092.75h0M1283.0 1098.55h0M1291.3 1081.15h0M1291.3 1086.95h0M1291.3 1092.75h0M1291.3 1098.55h0M1297.0 1081.15h0M1297.0 1086.95h0M1297.0 1092.75h0M1297.0 1098.55h0M465.3 1115.15h0M465.3 1120.95h0M465.3 1126.75h0M471.0 1115.15h0M471.0 1120.95h0M471.0 1126.75h0M471.0 1132.55h0M493.3 1115.15h0M493.3 1120.95h0M493.3 1126.75h0M493.3 1132.55h0M527.0 1115.15h0M527.0 1120.95h0M527.0 1126.75h0M527.0 1132.55h0M535.3 1115.15h0M535.3 1120.95h0M535.3 1126.75h0M535.3 1132.55h0M591.3 1115.15h0M591.3 1120.95h0M591.3 1126.75h0M591.3 1132.55h0M647.3 1115.15h0M647.3 1120.95h0M703.3 1115.15h0M703.3 1120.95h0M703.3 1126.75h0M703.3 1132.55h0M765.0 1115.15h0M765.0 1120.95h0M765.0 1126.75h0M765.0 1132.55h0M815.3 1115.15h0M815.3 1120.95h0M815.3 1126.75h0M815.3 1132.55h0M899.3 1115.15h0M899.3 1120.95h0M899.3 1126.75h0M899.3 1132.55h0M933.0 1115.15h0M955.3 1115.15h0M955.3 1120.95h0M955.3 1126.75h0M955.3 1132.55h0M1025.3 1115.15h0M1031.0 1115.15h0M1045.0 1115.15h0M1045.0 1120.95h0M1045.0 1126.75h0M1059.0 1115.15h0M1059.0 1120.95h0M1059.0 1126.75h0M1059.0 1132.55h0M1109.3 1115.15h0M1109.3 1120.95h0M1109.3 1126.75h0M1109.3 1132.55h0M1115.0 1115.15h0M1115.0 1120.95h0M1115.0 1126.75h0M1115.0 1132.55h0M1207.3 1115.15h0M1207.3 1120.95h0M1207.3 1126.75h0M1207.3 1132.55h0M1235.3 1115.15h0M1235.3 1120.95h0M1235.3 1126.75h0M1235.3 1132.55h0M1255.0 1115.15h0M1255.0 1120.95h0M1255.0 1126.75h0M1255.0 1132.55h0M1277.3 1115.15h0M1277.3 1120.95h0M1277.3 1126.75h0M1277.3 1132.55h0M1283.0 1115.15h0M1283.0 1120.95h0M1283.0 1126.75h0M1291.3 1115.15h0M1297.0 1115.15h0M471.0 1149.15h0M527.0 1149.15h0M527.0 1154.95h0M527.0 1160.75h0M527.0 1166.55h0M535.3 1149.15h0M535.3 1154.95h0M591.3 1149.15h0M591.3 1154.95h0M591.3 1160.75h0M591.3 1166.55h0M703.3 1149.15h0M703.3 1154.95h0M703.3 1160.75h0M703.3 1166.55h0M765.0 1149.15h0M765.0 1154.95h0M765.0 1160.75h0M765.0 1166.55h0M815.3 1149.15h0M899.3 1149.15h0M899.3 1154.95h0M899.3 1160.75h0M899.3 1166.55h0M955.3 1149.15h0M955.3 1154.95h0M955.3 1160.75h0M955.3 1166.55h0M1059.0 1149.15h0M1059.0 1154.95h0M1059.0 1160.75h0M1059.0 1166.55h0M1109.3 1149.15h0M1109.3 1154.95h0M1109.3 1160.75h0M1109.3 1166.55h0M1115.0 1149.15h0M1207.3 1149.15h0M1207.3 1154.95h0M1207.3 1160.75h0M1235.3 1149.15h0M1235.3 1154.95h0M1235.3 1160.75h0M1235.3 1166.55h0M1255.0 1149.15h0M1255.0 1154.95h0M1255.0 1160.75h0M1255.0 1166.55h0M1277.3 1149.15h0M527.0 1183.15h0M527.0 1188.95h0M527.0 1194.75h0M527.0 1200.55h0M591.3 1183.15h0M591.3 1188.95h0M591.3 1194.75h0M703.3 1183.15h0M899.3 1183.15h0M899.3 1188.95h0M899.3 1194.75h0M955.3 1183.15h0M955.3 1188.95h0M955.3 1194.75h0M1059.0 1183.15h0M1059.0 1188.95h0M1059.0 1194.75h0M1059.0 1200.55h0M1109.3 1183.15h0M1109.3 1188.95h0M1109.3 1194.75h0M1109.3 1200.55h0M1255.0 1183.15h0M527.0 1217.15h0M527.0 1222.95h0M527.0 1228.75h0M1059.0 1217.15h0M1059.0 1222.95h0M1059.0 1228.75h0M1109.3 1217.15h0M1109.3 1222.95h0M1109.3 1228.75h0M1109.3 1234.55h0"/><path stroke="#5ffdff" d="M801.3 163.15h0M807.0 163.15h0M807.0 168.95h0M807.0 174.75h0M807.0 180.55h0M871.3 163.15h0M871.3 168.95h0M871.3 174.75h0M871.3 180.55h0M877.0 168.95h0M1137.3 163.15h0M1143.0 163.15h0M1143.0 168.95h0M1143.0 174.75h0M1143.0 180.55h0M1123.3 401.15h0M1123.3 406.95h0M1123.3 412.75h0M1123.3 418.55h0M1129.0 406.95h0M829.3 435.15h0M829.3 440.95h0M829.3 446.75h0M829.3 452.55h0M835.0 435.15h0M835.0 440.95h0M843.3 435.15h0M843.3 440.95h0M849.0 435.15h0M849.0 440.95h0"/><path stroke="#ff76ff" d="M1059.0 163.15h0M1059.0 168.95h0M1059.0 174.75h0M1059.0 180.55h0M807.0 197.15h0M807.0 202.95h0M807.0 208.75h0M807.0 214.55h0M1101.0 197.15h0M1101.0 202.95h0M1101.0 208.75h0M1101.0 214.55h0M807.0 231.15h0M807.0 236.95h0M807.0 242.75h0M807.0 248.55h0M807.0 265.15h0M807.0 270.95h0M807.0 276.75h0M807.0 282.55h0M801.3 299.15h0M807.0 299.15h0M807.0 304.95h0M807.0 310.75h0M807.0 316.55h0M597.0 338.95h0M1017.0 333.15h0M1143.0 333.15h0M1143.0 338.95h0M1143.0 344.75h0M1143.0 350.55h0M513.0 367.15h0M513.0 372.95h0M513.0 378.75h0M513.0 384.55h0M933.0 372.95h0M507.3 418.55h0M513.0 401.15h0M513.0 406.95h0M513.0 412.75h0M513.0 418.55h0M1185.0 406.95h0M765.0 435.15h0"/><path stroke="#feffff" d="M1081.3 163.15h0M1081.3 168.95h0M1081.3 174.75h0M1081.3 180.55h0M1087.0 163.15h0M1087.0 168.95h0M1087.0 174.75h0M1087.0 180.55h0M493.3 401.15h0M493.3 406.95h0M493.3 412.75h0M493.3 418.55h0M499.0 401.15h0M499.0 406.95h0M499.0 412.75h0M499.0 418.55h0"/></g>
<g><text x="404" y="451.0" textLength="14" lengthAdjust="spacingAndGlyphs" xml:space="preserve" style="white-space:pre" fill="#feffff" stroke="#feffff" stroke-width="0.6"> </text><ellipse cx="411.3" cy="440.9" rx="5.2" ry="8.4" fill="none" stroke="#feffff" stroke-width="3.9"/><path d="M408.4 448.0L414.2 433.8" stroke="#feffff" stroke-width="3.1"/><text x="432" y="519.0" textLength="42" lengthAdjust="spacingAndGlyphs" xml:space="preserve" style="white-space:pre" fill="#feffff" stroke="#feffff" stroke-width="0.6"> .5</text><ellipse cx="439.3" cy="508.9" rx="5.2" ry="8.4" fill="none" stroke="#feffff" stroke-width="3.9"/><path d="M436.4 516.0L442.2 501.8" stroke="#feffff" stroke-width="3.1"/><text x="1244" y="519.0" textLength="56" lengthAdjust="spacingAndGlyphs" xml:space="preserve" style="white-space:pre" fill="#feffff" stroke="#feffff" stroke-width="0.6">2 .5</text><ellipse cx="1265.3" cy="508.9" rx="5.2" ry="8.4" fill="none" stroke="#feffff" stroke-width="3.9"/><path d="M1262.4 516.0L1268.2 501.8" stroke="#feffff" stroke-width="3.1"/><text x="194" y="587.0" textLength="238" lengthAdjust="spacingAndGlyphs" xml:space="preserve" style="white-space:pre" fill="#feffff" stroke="#feffff" stroke-width="0.6">3.381297657842839</text><text x="1328" y="587.0" textLength="42" lengthAdjust="spacingAndGlyphs" xml:space="preserve" style="white-space:pre" fill="#6871ff" stroke="#6871ff" stroke-width="0.6">y_1</text><text x="166" y="1233.0" textLength="266" lengthAdjust="spacingAndGlyphs" xml:space="preserve" style="white-space:pre" fill="#feffff" stroke="#feffff" stroke-width="0.6">-3.27113 5396396 44</text><ellipse cx="285.3" cy="1222.9" rx="5.2" ry="8.4" fill="none" stroke="#feffff" stroke-width="3.9"/><path d="M282.4 1230.0L288.2 1215.8" stroke="#feffff" stroke-width="3.1"/><ellipse cx="397.3" cy="1222.9" rx="5.2" ry="8.4" fill="none" stroke="#feffff" stroke-width="3.9"/><path d="M394.4 1230.0L400.2 1215.8" stroke="#feffff" stroke-width="3.1"/><text x="446" y="1301.0" textLength="42" lengthAdjust="spacingAndGlyphs" xml:space="preserve" style="white-space:pre" fill="#feffff" stroke="#feffff" stroke-width="0.6"> .5</text><ellipse cx="453.3" cy="1290.9" rx="5.2" ry="8.4" fill="none" stroke="#feffff" stroke-width="3.9"/><path d="M450.4 1298.0L456.2 1283.8" stroke="#feffff" stroke-width="3.1"/><text x="1230" y="1301.0" textLength="84" lengthAdjust="spacingAndGlyphs" xml:space="preserve" style="white-space:pre" fill="#feffff" stroke="#feffff" stroke-width="0.6">1   .5</text><ellipse cx="1251.3" cy="1290.9" rx="5.2" ry="8.4" fill="none" stroke="#feffff" stroke-width="3.9"/><path d="M1248.4 1298.0L1254.2 1283.8" stroke="#feffff" stroke-width="3.1"/><ellipse cx="1265.3" cy="1290.9" rx="5.2" ry="8.4" fill="none" stroke="#feffff" stroke-width="3.9"/><path d="M1262.4 1298.0L1268.2 1283.8" stroke="#feffff" stroke-width="3.1"/><ellipse cx="1279.3" cy="1290.9" rx="5.2" ry="8.4" fill="none" stroke="#feffff" stroke-width="3.9"/><path d="M1276.4 1298.0L1282.2 1283.8" stroke="#feffff" stroke-width="3.1"/></g>
<rect x="124" y="1308" width="14" height="34" fill="#feffff"/>
</svg>
</body></html>
